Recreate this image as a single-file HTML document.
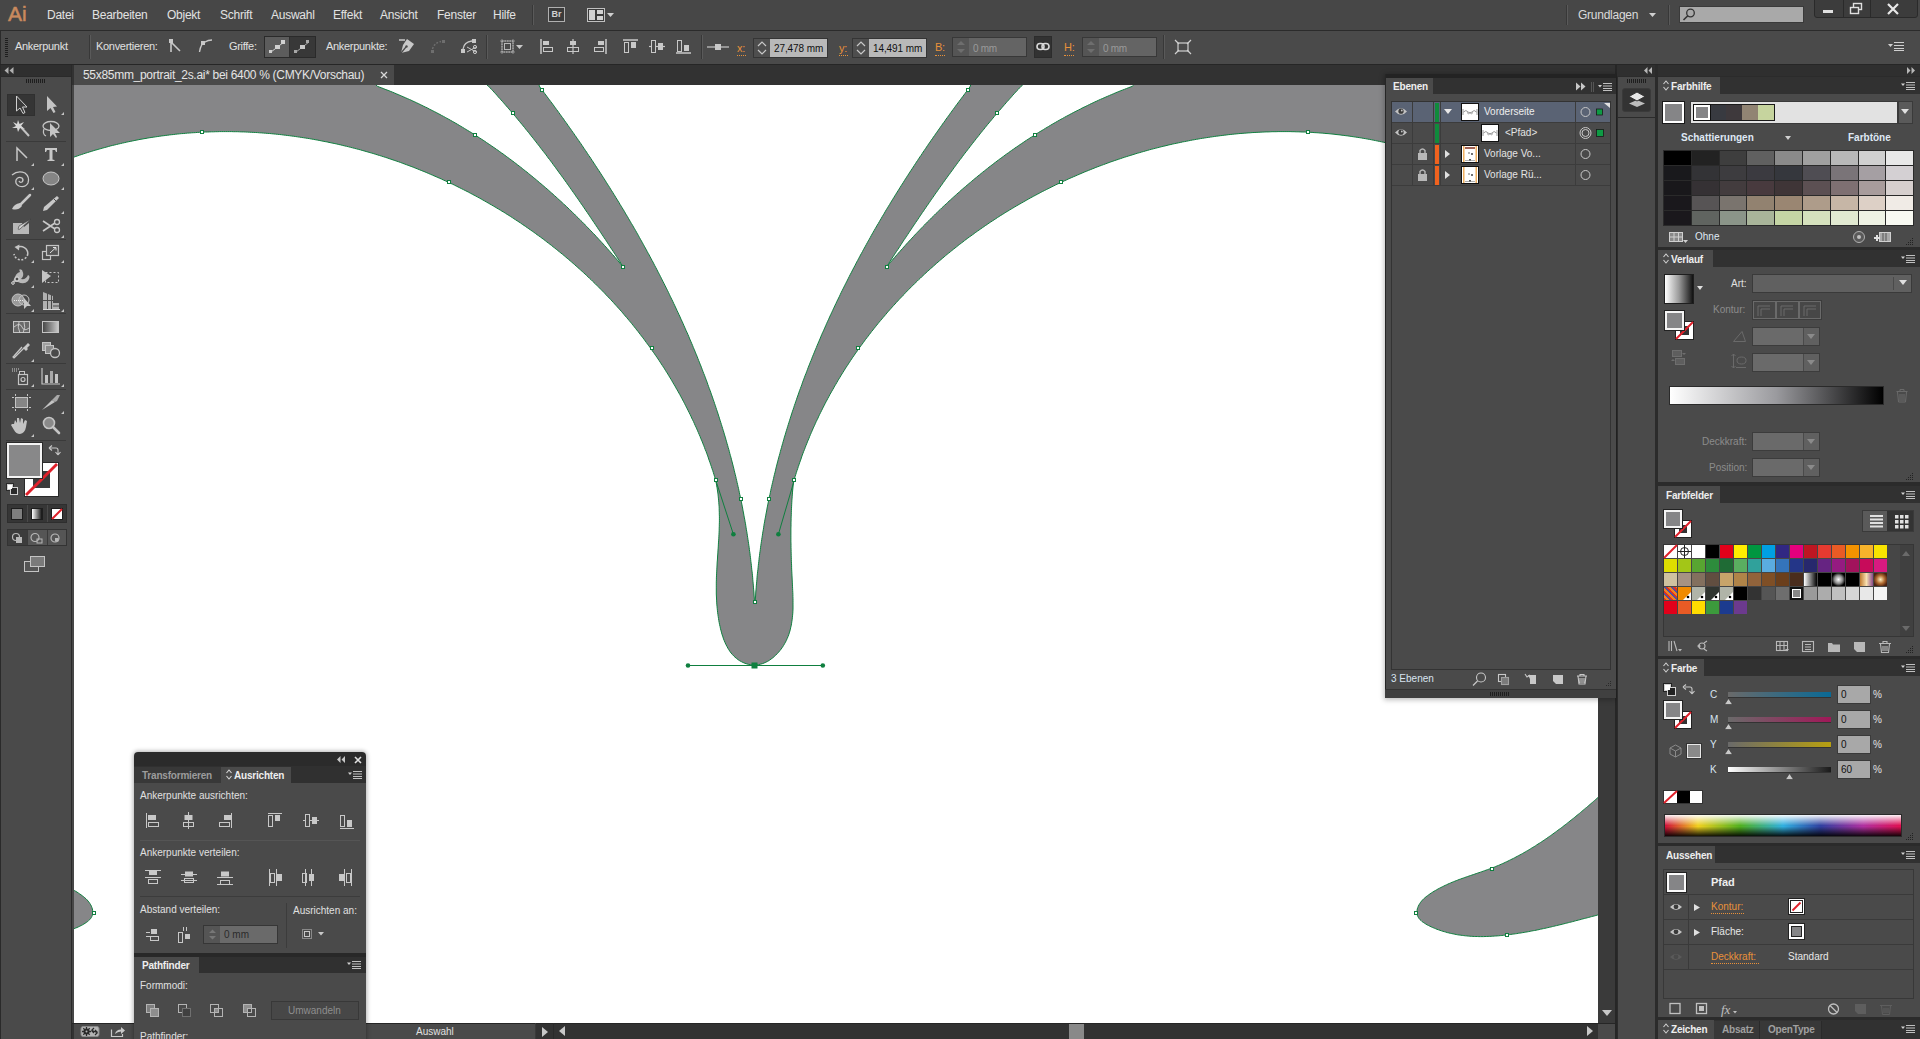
<!DOCTYPE html>
<html><head><meta charset="utf-8">
<style>
*{margin:0;padding:0;box-sizing:border-box}
html,body{width:1920px;height:1039px;overflow:hidden;background:#474747;font-family:"Liberation Sans",sans-serif;color:#dcdcdc}
.a{position:absolute}
.t{position:absolute;white-space:nowrap;line-height:12px;font-size:12px}
.s{position:absolute;white-space:nowrap;line-height:11px;font-size:11px;letter-spacing:-0.3px}
.b{font-weight:bold}
svg{position:absolute;overflow:visible}
.mn{position:absolute;top:9px;font-size:12px;line-height:12px;letter-spacing:-0.25px;color:#e2e2e2;white-space:nowrap}
.vsep{position:absolute;width:2px;border-left:1px solid #383838;border-right:1px solid #5a5a5a}
.org{color:#e8913a}
.dot{border-bottom:1px dotted #e8913a}
.panel{position:absolute;background:#4b4b4b}
.phead{position:absolute;background:#323232}
.tab{position:absolute;background:#4b4b4b;font-size:11px;line-height:11px;font-weight:bold;color:#dedede;letter-spacing:-0.2px;white-space:nowrap}
.menuic{position:absolute;width:14px;height:8px}
</style></head><body>
<!-- MENUBAR -->
<div class="a" style="left:0;top:0;width:1920px;height:30px;background:#474747"></div>
<div class="a" style="left:8px;top:3px;font-size:21px;line-height:21px;color:#c98a5e;letter-spacing:0px;-webkit-text-stroke:0.5px #c98a5e">Ai</div>
<div class="mn" style="left:47px">Datei</div>
<div class="mn" style="left:92px">Bearbeiten</div>
<div class="mn" style="left:167px">Objekt</div>
<div class="mn" style="left:220px">Schrift</div>
<div class="mn" style="left:271px">Auswahl</div>
<div class="mn" style="left:333px">Effekt</div>
<div class="mn" style="left:380px">Ansicht</div>
<div class="mn" style="left:437px">Fenster</div>
<div class="mn" style="left:493px">Hilfe</div>
<div class="vsep" style="left:532px;top:5px;height:20px"></div>
<div class="a" style="left:548px;top:7px;width:17px;height:15px;border:1px solid #b0b0b0;background:#3a3a3a;color:#d0d0d0;font-size:9px;line-height:13px;text-align:center;font-weight:bold">Br</div>
<svg style="left:587px;top:8px" width="30" height="14"><rect x="0.5" y="0.5" width="17" height="13" fill="#3a3a3a" stroke="#c0c0c0"/><rect x="2" y="2" width="6" height="10" fill="#d0d0d0"/><rect x="10" y="2" width="6" height="4" fill="#d0d0d0"/><rect x="10" y="8" width="6" height="4" fill="#d0d0d0"/><path d="M20,5 L27,5 L23.5,9 Z" fill="#d0d0d0"/></svg>
<div class="vsep" style="left:1566px;top:5px;height:20px"></div>
<div class="mn" style="left:1578px;color:#dadada">Grundlagen</div>
<svg style="left:1649px;top:13px" width="8" height="5"><path d="M0,0 L7,0 L3.5,4 Z" fill="#d0d0d0"/></svg>
<div class="vsep" style="left:1668px;top:5px;height:20px"></div>
<div class="a" style="left:1679px;top:6px;width:125px;height:17px;background:#a9a9a9;border:1px solid #3a3a3a"></div>
<svg style="left:1682px;top:8px" width="14" height="14"><circle cx="8.5" cy="5" r="3.8" fill="none" stroke="#333" stroke-width="1.3"/><path d="M5.8,7.8 L1.5,12" stroke="#333" stroke-width="1.6"/></svg>
<div class="a" style="left:1814px;top:-2px;width:104px;height:20px;background:#3c3c3c;border:1px solid #2a2a2a;border-radius:0 0 3px 3px"></div>
<div class="a" style="left:1843px;top:0;width:1px;height:18px;background:#2a2a2a"></div>
<div class="a" style="left:1870px;top:0;width:1px;height:18px;background:#2a2a2a"></div>
<div class="a" style="left:1823px;top:10px;width:10px;height:3px;background:#e0e0e0"></div>
<svg style="left:1850px;top:3px" width="14" height="12"><rect x="3.5" y="0.5" width="8" height="6" fill="none" stroke="#e0e0e0" stroke-width="1.4"/><rect x="0.5" y="4.5" width="8" height="6" fill="#3c3c3c" stroke="#e0e0e0" stroke-width="1.4"/></svg>
<svg style="left:1887px;top:3px" width="12" height="12"><path d="M1,1 L11,11 M11,1 L1,11" stroke="#e8e8e8" stroke-width="2.2"/></svg>
<!-- CONTROL BAR -->
<div class="a" style="left:0;top:30px;width:1920px;height:1px;background:#2b2b2b"></div>
<div class="a" style="left:0;top:31px;width:1920px;height:33px;background:#4a4a4a"></div>
<div class="a" style="left:0;top:31px;width:1px;height:33px;background:#2b2b2b"></div>
<div class="a" style="left:0;top:64px;width:1920px;height:1px;background:#262626"></div>
<div class="a" style="left:5px;top:38px;width:3px;height:19px;background:repeating-linear-gradient(#1e1e1e 0 1px,#4a4a4a 1px 2px)"></div>
<div class="s" style="left:15px;top:41px;color:#e0e0e0">Ankerpunkt</div>
<div class="vsep" style="left:89px;top:35px;height:24px"></div>
<div class="s" style="left:96px;top:41px;color:#e0e0e0">Konvertieren:</div>
<svg style="left:168px;top:38px" width="16" height="16"><rect x="1" y="1" width="4" height="4" fill="#c8c8c8"/><path d="M3,4 L3,14 M3.5,4.5 L12,13" stroke="#c8c8c8" stroke-width="1.6" fill="none"/></svg>
<svg style="left:198px;top:38px" width="16" height="16"><rect x="3" y="3" width="4" height="4" fill="#c8c8c8"/><path d="M1.5,14 Q3,5 7,4 Q10,2 14,2" stroke="#c8c8c8" stroke-width="1.4" fill="none"/></svg>
<div class="s" style="left:229px;top:41px;color:#e0e0e0">Griffe:</div>
<div class="a" style="left:264px;top:36px;width:52px;height:22px;background:#2f2f2f;border:1px solid #2a2a2a"></div>
<div class="a" style="left:265px;top:37px;width:24px;height:20px;background:#5c5c5c"></div>
<div class="a" style="left:290px;top:37px;width:25px;height:20px;background:#383838"></div>
<svg style="left:269px;top:40px" width="18" height="14"><path d="M2,12 L15,2" stroke="#d0d0d0" stroke-width="1"/><rect x="12" y="0" width="4" height="4" fill="#d0d0d0"/><rect x="6" y="5" width="5" height="4" fill="#d0d0d0"/><rect x="0" y="10" width="3" height="3" fill="#d0d0d0"/></svg>
<svg style="left:294px;top:40px" width="18" height="14"><path d="M2,12 L15,2" stroke="#a8a8a8" stroke-width="1"/><rect x="12" y="0" width="3" height="3" fill="#a8a8a8"/><rect x="6" y="5" width="5" height="4" fill="#c8c8c8"/><rect x="0" y="10" width="3" height="3" fill="#a8a8a8"/></svg>
<div class="s" style="left:326px;top:41px;color:#e0e0e0">Ankerpunkte:</div>
<svg style="left:398px;top:38px" width="17" height="17"><path d="M1,2 L7,2" stroke="#c8c8c8" stroke-width="1.5"/><path d="M9,1 L16,6 L11,13 L3,15 L5,7 Z" fill="#c8c8c8"/><path d="M3,15 L8,9" stroke="#4a4a4a" stroke-width="1.2"/><circle cx="8.5" cy="8.5" r="1.2" fill="#4a4a4a"/></svg>
<svg style="left:430px;top:39px" width="16" height="16"><rect x="1" y="11" width="3" height="3" fill="#6e6e6e"/><rect x="12" y="1" width="3" height="3" fill="#6e6e6e"/><path d="M2.5,10 Q4,4 11,2.5" stroke="#6e6e6e" stroke-width="1.4" fill="none" stroke-dasharray="2,1.5"/></svg>
<svg style="left:460px;top:38px" width="18" height="17"><rect x="1" y="11" width="4" height="4" fill="#c8c8c8"/><rect x="12" y="1" width="4" height="4" fill="#c8c8c8"/><path d="M3,11 Q4,4 12,3" stroke="#c8c8c8" stroke-width="1.3" fill="none"/><path d="M7,9 L16,14 M7,14 L16,9" stroke="#c8c8c8" stroke-width="1"/><circle cx="15" cy="9" r="1.6" fill="none" stroke="#c8c8c8"/><circle cx="15" cy="14" r="1.6" fill="none" stroke="#c8c8c8"/></svg>
<div class="vsep" style="left:486px;top:35px;height:24px"></div>
<svg style="left:499px;top:38px" width="26" height="18"><rect x="3" y="3" width="11" height="11" fill="none" stroke="#b8b8b8" stroke-dasharray="1.5,1"/><rect x="5.5" y="5.5" width="6" height="6" fill="none" stroke="#b8b8b8"/><path d="M1,3 L16,3 M1,14 L16,14 M3,1 L3,16 M14,1 L14,16" stroke="#b8b8b8" stroke-width="0.6"/><path d="M17,7 L24,7 L20.5,11 Z" fill="#c8c8c8"/></svg>
<svg style="left:540px;top:39px" width="15" height="15"><path d="M1,0 L1,15" stroke="#c8c8c8" stroke-width="1.5"/><rect x="3" y="2" width="6" height="4" fill="#c8c8c8"/><rect x="3.5" y="8.5" width="9" height="4" fill="none" stroke="#c8c8c8"/></svg>
<svg style="left:566px;top:39px" width="15" height="15"><path d="M7,0 L7,15" stroke="#c8c8c8" stroke-width="1.2"/><rect x="4" y="2" width="6" height="4" fill="#c8c8c8"/><rect x="1.5" y="8.5" width="11" height="4" fill="none" stroke="#c8c8c8"/></svg>
<svg style="left:593px;top:39px" width="15" height="15"><path d="M13,0 L13,15" stroke="#c8c8c8" stroke-width="1.5"/><rect x="5" y="2" width="6" height="4" fill="#c8c8c8"/><rect x="1.5" y="8.5" width="9" height="4" fill="none" stroke="#c8c8c8"/></svg>
<svg style="left:623px;top:39px" width="15" height="15"><path d="M0,1 L15,1" stroke="#c8c8c8" stroke-width="1.5"/><rect x="1.5" y="3.5" width="4" height="10" fill="none" stroke="#c8c8c8"/><rect x="8" y="3" width="5" height="6" fill="#c8c8c8"/></svg>
<svg style="left:649px;top:39px" width="16" height="15"><path d="M0,7.5 L16,7.5" stroke="#c8c8c8" stroke-width="1.2"/><rect x="2.5" y="1.5" width="4" height="12" fill="#4a4a4a" stroke="#c8c8c8"/><rect x="9" y="4" width="5" height="7" fill="#c8c8c8"/></svg>
<svg style="left:676px;top:39px" width="15" height="15"><path d="M0,14 L15,14" stroke="#c8c8c8" stroke-width="1.5"/><rect x="1.5" y="1.5" width="4" height="11" fill="none" stroke="#c8c8c8"/><rect x="8" y="6" width="5" height="6" fill="#c8c8c8"/></svg>
<div class="vsep" style="left:701px;top:35px;height:24px"></div>
<svg style="left:707px;top:42px" width="22" height="10"><path d="M0,5 L22,5" stroke="#c8c8c8" stroke-width="1.2"/><rect x="8" y="2" width="6" height="6" fill="#c8c8c8"/></svg>
<div class="s org" style="left:737px;top:43px;font-size:11px">x:</div>
<div class="a" style="left:737px;top:55px;width:9px;border-bottom:1px dotted #e8913a"></div>
<div class="a spin" style="left:753px;top:38px;width:75px;height:20px;background:#3a3a3a;border:1px solid #353535"></div>
<div class="a" style="left:754px;top:39px;width:16px;height:18px;background:#4e4e4e"></div>
<svg style="left:757px;top:41px" width="10" height="14"><path d="M1,5 L5,1 L9,5 M1,9 L5,13 L9,9" stroke="#c8c8c8" stroke-width="1.2" fill="none"/></svg>
<div class="a" style="left:770px;top:39px;width:57px;height:18px;background:#b9b9b9"></div>
<div class="s" style="left:774px;top:43px;color:#111;font-size:10px;letter-spacing:-0.1px">27,478 mm</div>
<div class="s org" style="left:839px;top:43px">y:</div>
<div class="a" style="left:839px;top:55px;width:9px;border-bottom:1px dotted #e8913a"></div>
<div class="a" style="left:852px;top:38px;width:75px;height:20px;background:#3a3a3a;border:1px solid #353535"></div>
<div class="a" style="left:853px;top:39px;width:16px;height:18px;background:#4e4e4e"></div>
<svg style="left:856px;top:41px" width="10" height="14"><path d="M1,5 L5,1 L9,5 M1,9 L5,13 L9,9" stroke="#c8c8c8" stroke-width="1.2" fill="none"/></svg>
<div class="a" style="left:869px;top:39px;width:57px;height:18px;background:#b9b9b9"></div>
<div class="s" style="left:873px;top:43px;color:#111;font-size:10px;letter-spacing:-0.1px">14,491 mm</div>
<div class="s org" style="left:935px;top:42px">B:</div>
<div class="a" style="left:935px;top:55px;width:10px;border-bottom:1px dotted #e8913a"></div>
<div class="a" style="left:952px;top:37px;width:75px;height:20px;background:#3e3e3e;border:1px solid #383838"></div>
<div class="a" style="left:953px;top:38px;width:16px;height:18px;background:#555"></div>
<svg style="left:956px;top:40px" width="10" height="14"><path d="M1,5 L5,1 L9,5 Z M1,9 L5,13 L9,9 Z" fill="#6e6e6e"/></svg>
<div class="a" style="left:969px;top:38px;width:57px;height:18px;background:#646464"></div>
<div class="s" style="left:973px;top:43px;color:#9a9a9a;font-size:10px">0 mm</div>
<div class="a" style="left:1034px;top:36px;width:18px;height:22px;background:#323232;border:1px solid #2c2c2c"></div>
<svg style="left:1036px;top:42px" width="14" height="10"><rect x="1" y="1.5" width="7" height="6" rx="3" fill="none" stroke="#d8d8d8" stroke-width="1.6"/><rect x="6" y="1.5" width="7" height="6" rx="3" fill="none" stroke="#d8d8d8" stroke-width="1.6"/></svg>
<div class="s org" style="left:1064px;top:42px">H:</div>
<div class="a" style="left:1064px;top:55px;width:10px;border-bottom:1px dotted #e8913a"></div>
<div class="a" style="left:1082px;top:37px;width:75px;height:20px;background:#3e3e3e;border:1px solid #383838"></div>
<div class="a" style="left:1083px;top:38px;width:16px;height:18px;background:#555"></div>
<svg style="left:1086px;top:40px" width="10" height="14"><path d="M1,5 L5,1 L9,5 Z M1,9 L5,13 L9,9 Z" fill="#6e6e6e"/></svg>
<div class="a" style="left:1099px;top:38px;width:57px;height:18px;background:#646464"></div>
<div class="s" style="left:1103px;top:43px;color:#9a9a9a;font-size:10px">0 mm</div>
<div class="vsep" style="left:1163px;top:35px;height:24px"></div>
<svg style="left:1174px;top:39px" width="18" height="16"><rect x="4" y="4" width="10" height="8" fill="none" stroke="#d0d0d0" stroke-width="1.2"/><path d="M1,1 L5,5 M17,1 L13,5 M1,15 L5,11 M17,15 L13,11" stroke="#d0d0d0" stroke-width="1.2"/></svg>
<svg style="left:1888px;top:42px" width="16" height="9"><path d="M0,2 L5,2 L2.5,5 Z" fill="#d0d0d0"/><path d="M6,0.5 L16,0.5 M6,3.5 L16,3.5 M6,6.5 L16,6.5 M6,8.5 L16,8.5" stroke="#d0d0d0" stroke-width="1"/></svg>
<!-- TOOLBAR -->
<div class="a" style="left:0;top:65px;width:72px;height:974px;background:#2a2a2a"></div>
<div class="a" style="left:1px;top:65px;width:70px;height:11px;background:#2f2f2f"></div>
<svg style="left:4px;top:67px" width="10" height="7"><path d="M4.5,0 L0.5,3.5 L4.5,7 Z M9.5,0 L5.5,3.5 L9.5,7 Z" fill="#b0b0b0"/></svg>
<div class="a" style="left:1px;top:77px;width:70px;height:962px;background:#4a4a4a"></div>
<div class="a" style="left:26px;top:79px;width:19px;height:4px;background:repeating-linear-gradient(90deg,#1e1e1e 0 1px,#4a4a4a 1px 2px)"></div>
<div class="a" style="left:7px;top:94px;width:28px;height:22px;background:#353535;border:1px solid #303030"></div>
<div class="a" style="left:6px;top:141px;width:60px;height:1px;background:#3a3a3a"></div>
<div class="a" style="left:6px;top:239px;width:60px;height:1px;background:#3a3a3a"></div>
<div class="a" style="left:6px;top:313px;width:60px;height:1px;background:#3a3a3a"></div>
<div class="a" style="left:6px;top:363px;width:60px;height:1px;background:#3a3a3a"></div>
<div class="a" style="left:6px;top:389px;width:60px;height:1px;background:#3a3a3a"></div>
<div class="a" style="left:6px;top:440px;width:60px;height:1px;background:#3a3a3a"></div>
<svg style="left:0;top:0" width="72" height="600">
<g fill="#c4c4c4">
<!-- flyout triangles -->
<path d="M64,112 L64,115 L61,115 Z M34,163 L34,166 L31,166 Z M64,163 L64,166 L61,166 Z M34,187 L34,190 L31,190 Z M64,187 L64,190 L61,190 Z M64,211 L64,214 L61,214 Z M64,235 L64,238 L61,238 Z M34,260 L34,263 L31,263 Z M64,260 L64,263 L61,263 Z M34,285 L34,288 L31,288 Z M34,309 L34,312 L31,312 Z M64,309 L64,312 L61,312 Z M34,359 L34,362 L31,362 Z M34,384 L34,387 L31,387 Z M64,384 L64,387 L61,387 Z M64,411 L64,414 L61,414 Z M34,434 L34,437 L31,437 Z"/>
</g>
<!-- row1 selection -->
<path d="M16.5,96 L16.5,111 L20,108 L23,113.5 L25,112.5 L22.5,107 L27,107 Z" fill="#3a3a3a" stroke="#d0d0d0" stroke-width="1"/>
<path d="M47,96 L47,111 L50.5,108 L53.5,113 L55.5,112 L53,107 L57,106.5 Z" fill="#c4c4c4"/>
<!-- row2 wand / lasso -->
<path d="M19,125 L29,136" stroke="#c4c4c4" stroke-width="2"/>
<path d="M18,120 L19.5,124 L24,122 L21,126 L25,129 L20,128 L18,132 L17,128 L12,128 L16,126 L13,122 L17,124 Z" fill="#d8d8d8"/>
<ellipse cx="51" cy="126" rx="8" ry="4.5" fill="none" stroke="#c4c4c4" stroke-width="1.3"/>
<path d="M50,123 L50,137 L53,134 L56,138 L57,137 L55,133 L60,133 Z" fill="#c4c4c4"/>
<path d="M44,129 Q42,134 46,136" fill="none" stroke="#c4c4c4" stroke-width="1.2"/>
<!-- row3 line / T -->
<path d="M17,161 L17,148 L27,158" fill="none" stroke="#c8c8c8" stroke-width="1.5"/>
<path d="M45,148 L57,148 L57,152 L56,152 L55,150 L52.5,150 L52.5,159.5 L54.5,160 L54.5,161 L47.5,161 L47.5,160 L49.5,159.5 L49.5,150 L47,150 L46,152 L45,152 Z" fill="#c8c8c8"/>
<!-- row4 spiral / ellipse -->
<path d="M12,175 Q18,170 25,173 Q30,177 28,183 Q25,188 19,186 Q15,184 16,180 Q18,176 22,178 Q24,180 22,182 Q20,183 19,181" fill="none" stroke="#c8c8c8" stroke-width="1.3"/>
<ellipse cx="51" cy="178.5" rx="8" ry="6.5" fill="#858585" stroke="#c8c8c8" stroke-width="1"/>
<!-- row5 brush / pencil -->
<path d="M30,195 L20,205" stroke="#c8c8c8" stroke-width="2.5" stroke-linecap="round"/>
<path d="M20,203 Q14,204 12,209 Q18,211 22,206 Z" fill="#c8c8c8"/>
<path d="M57,196 L59,198 L47,210 L43,211 L44,207 Z" fill="#c8c8c8"/>
<path d="M54,199 L56,201" stroke="#4a4a4a" stroke-width="1"/>
<!-- row6 blob brush / scissors -->
<path d="M13,223 L22,223 L24,227 L29,223 L29,234 L13,234 Z" fill="#b8b8b8"/>
<path d="M31,219 L20,229 Q17,231 19,226 Z" fill="#d0d0d0" stroke="#3a3a3a" stroke-width="0.6"/>
<path d="M43,221 L55,229 M43,231 L55,223" stroke="#c8c8c8" stroke-width="1.6"/>
<circle cx="57" cy="222" r="2.5" fill="none" stroke="#c8c8c8" stroke-width="1.3"/>
<circle cx="57" cy="230" r="2.5" fill="none" stroke="#c8c8c8" stroke-width="1.3"/>
<!-- row7 rotate / scale -->
<g transform="translate(0,2)"><path d="M17,245.8 A7,7 0 0 1 27.8,252" fill="none" stroke="#c4c4c4" stroke-width="1.5"/>
<path d="M27.8,252 A7,7 0 0 1 14,252" fill="none" stroke="#c4c4c4" stroke-width="1.6" stroke-dasharray="2,1.6"/>
<path d="M14.5,245 L19.5,242.5 L19,248.5 Z" fill="#c4c4c4"/></g>
<rect x="42.5" y="251.5" width="8" height="8" fill="none" stroke="#c4c4c4" stroke-width="1.2"/>
<rect x="46.5" y="245.5" width="12" height="10" fill="#555" stroke="#c4c4c4" stroke-width="1.2"/>
<path d="M50,253 L56,247.5 M53,247.5 L56,247.5 L56,250.5" fill="none" stroke="#e0e0e0" stroke-width="1"/>
<!-- row8 warp / free transform -->
<path d="M13,282 Q16,272 20,272 Q18,268 22,270 Q25,276 21,279 Q26,280 28,275 Q31,276 28,281 Q24,285 18,282" fill="#b8b8b8"/>
<circle cx="17" cy="279" r="2" fill="#4a4a4a" stroke="#e0e0e0"/>
<circle cx="13" cy="283" r="1.3" fill="none" stroke="#e0e0e0"/>
<path d="M42,270 L42,283 L51,276 Z" fill="#c4c4c4"/>
<rect x="45.5" y="272.5" width="13" height="10" fill="none" stroke="#c4c4c4" stroke-dasharray="2,2"/>
<!-- row9 shape builder / perspective -->
<circle cx="18" cy="300" r="6" fill="#9a9a9a" stroke="#c4c4c4"/>
<circle cx="24" cy="300" r="5" fill="none" stroke="#c4c4c4"/>
<path d="M14,300.5 L25,300.5" stroke="#e8e8e8" stroke-dasharray="1,1"/>
<path d="M24,298 L24,309 L27,306 L31,306 Z" fill="#c8c8c8"/>
<path d="M43,292 L53,296 L53,303 L59,303 L59,309 L43,309 Z" fill="#b0b0b0"/>
<path d="M47.5,293 L47.5,309 M51.5,295 L51.5,309 M43,300.5 L53,300.5 M53,306 L59,306" stroke="#4a4a4a" stroke-width="1"/>
<path d="M43,309.5 L60,309.5" stroke="#d8d8d8"/>
<!-- row10 mesh / gradient -->
<rect x="13.5" y="321.5" width="16" height="11" fill="#6a6a6a" stroke="#c4c4c4"/>
<path d="M14,327 Q20,322 22,327 Q24,332 29,328 M19,322 Q17,327 20,333 M24,322 Q26,327 23,333" fill="none" stroke="#d0d0d0" stroke-width="0.9"/>
<defs><linearGradient id="tg" x1="0" x2="1"><stop offset="0" stop-color="#444"/><stop offset="1" stop-color="#ccc"/></linearGradient></defs>
<rect x="42.5" y="321.5" width="16" height="11" fill="url(#tg)" stroke="#c4c4c4"/>
<!-- row11 eyedropper / blend -->
<path d="M28,343 L30,345 L27,348 L28,349 L26,351 L23,348 Z" fill="#c8c8c8"/>
<path d="M24,348 L15,357 L14,358 L13,357 L14,356 L22,347" fill="none" stroke="#c8c8c8" stroke-width="1.2"/>
<rect x="42.5" y="342.5" width="8" height="8" fill="#a0a0a0" stroke="#c4c4c4"/>
<rect x="45.5" y="345.5" width="8" height="8" fill="#8a8a8a" stroke="#c4c4c4"/>
<circle cx="55" cy="353" r="4.5" fill="#4a4a4a" stroke="#c4c4c4" stroke-width="1.3"/>
<!-- row12 symbol sprayer / graph -->
<path d="M12,369 L20,369 M12,371 L18,371" stroke="#d0d0d0" stroke-dasharray="1,1"/>
<rect x="19.5" y="371.5" width="5" height="3" fill="none" stroke="#c4c4c4"/>
<rect x="18.5" y="374.5" width="9" height="10" fill="none" stroke="#c4c4c4" stroke-width="1.2"/>
<circle cx="23" cy="379.5" r="2" fill="none" stroke="#c4c4c4" stroke-width="1.2"/>
<path d="M42,368 L42,384 L60,384" fill="none" stroke="#c4c4c4" stroke-width="1.2"/>
<rect x="45" y="375" width="3" height="8" fill="#c4c4c4"/><rect x="50" y="371" width="3" height="12" fill="#a8a8a8"/><rect x="55" y="374" width="3" height="9" fill="#c4c4c4"/>
<!-- row13 artboard / slice -->
<rect x="15.5" y="397.5" width="12" height="10" fill="#858585" stroke="#c4c4c4"/>
<path d="M12,397.5 L14,397.5 M29,397.5 L31,397.5 M12,407.5 L14,407.5 M29,407.5 L31,407.5 M15.5,394 L15.5,396 M27.5,394 L27.5,396 M15.5,409 L15.5,411 M27.5,409 L27.5,411" stroke="#c4c4c4"/>
<path d="M42,410 L52,400 L55,402 Z" fill="#c4c4c4"/>
<path d="M52,400 L57,395 L60,395 L57,401 L55,402 Z" fill="#a8a8a8"/>
<!-- row14 hand / zoom -->
<path d="M14,424 L15,420 L17,423 L17,418 L19,418 L20,423 L21,418 L23,419 L23,424 L25,420 L27,421 L26,427 Q25,433 20,434 Q16,434 14,430 L11,425 L12,424 Z" fill="#c4c4c4"/>
<circle cx="49" cy="423" r="5.5" fill="#8a8a8a" stroke="#c4c4c4" stroke-width="1.6"/>
<path d="M53,427 L59,433" stroke="#c4c4c4" stroke-width="2.6" stroke-linecap="round"/>
</svg>
<!-- fill/stroke -->
<div class="a" style="left:24px;top:462px;width:35px;height:35px;background:#fff;border:1px solid #2a2a2a"></div>
<div class="a" style="left:32px;top:470px;width:19px;height:19px;background:#3a3a3a;border:1px solid #fff"></div>
<svg style="left:24px;top:462px" width="35" height="35"><path d="M2,33 L33,2" stroke="#e0202a" stroke-width="2.8"/></svg>
<div class="a" style="left:7px;top:443px;width:35px;height:35px;background:#888889;border:2px solid #f4f4f4;outline:1px solid #2a2a2a"></div>
<svg style="left:49px;top:444px" width="11" height="12"><path d="M1.5,4 L7,4 Q9,4 9,6 L9,10.5 M0,4 L3,1.5 M0,4 L3,6.5 M9,11 L6.5,8 M9,11 L11.5,8" fill="none" stroke="#c8c8c8" stroke-width="1.1"/></svg>
<svg style="left:6px;top:483px" width="12" height="12"><rect x="0.5" y="0.5" width="7" height="7" fill="#d0d0d0" stroke="#2a2a2a"/><rect x="4.5" y="4.5" width="7" height="7" fill="#2a2a2a" stroke="#d0d0d0"/><rect x="2" y="2" width="4" height="4" fill="#fff"/></svg>
<div class="a" style="left:7px;top:504px;width:60px;height:19px;background:#363636;border:1px solid #2e2e2e"></div>
<div class="a" style="left:27px;top:505px;width:1px;height:17px;background:#4a4a4a"></div>
<div class="a" style="left:47px;top:505px;width:1px;height:17px;background:#4a4a4a"></div>
<div class="a" style="left:11px;top:508px;width:12px;height:12px;background:#7f7f7f;border:1px solid #1e1e1e"></div>
<div class="a" style="left:31px;top:508px;width:12px;height:12px;background:linear-gradient(90deg,#fff,#111);border:1px solid #1e1e1e"></div>
<div class="a" style="left:51px;top:508px;width:12px;height:12px;background:#fff;border:1px solid #1e1e1e;overflow:hidden"></div>
<svg style="left:51px;top:508px" width="12" height="12"><path d="M1,11 L11,1" stroke="#e0202a" stroke-width="2"/></svg>
<div class="a" style="left:7px;top:529px;width:60px;height:17px;background:#555555;border:1px solid #333"></div>
<div class="a" style="left:8px;top:530px;width:19px;height:15px;background:#3c3c3c"></div>
<div class="a" style="left:27px;top:530px;width:1px;height:15px;background:#3a3a3a"></div>
<div class="a" style="left:47px;top:530px;width:1px;height:15px;background:#3a3a3a"></div>
<svg style="left:11px;top:532px" width="56" height="12"><circle cx="5" cy="5" r="3.5" fill="none" stroke="#b8b8b8" stroke-width="1.2"/><rect x="5" y="5" width="6" height="6" fill="#b8b8b8"/><circle cx="24" cy="5.5" r="4" fill="none" stroke="#b8b8b8" stroke-width="1.2"/><rect x="26" y="7" width="5" height="4" fill="none" stroke="#b8b8b8"/><circle cx="44" cy="6" r="4" fill="none" stroke="#b8b8b8" stroke-width="1.2"/><rect x="44" y="6" width="3.5" height="3.5" fill="#b8b8b8"/></svg>
<svg style="left:23px;top:555px" width="24" height="18"><rect x="1.5" y="6.5" width="14" height="10" fill="#555" stroke="#c4c4c4"/><rect x="7.5" y="1.5" width="14" height="10" fill="#7a7a7a" stroke="#c4c4c4"/></svg>
<!-- DOC AREA -->
<div class="a" style="left:72px;top:65px;width:1545px;height:20px;background:#323232"></div>
<div class="a" style="left:74px;top:65px;width:320px;height:20px;background:#4a4a4a"></div>
<div class="t" style="left:83px;top:69px;font-size:12px;letter-spacing:-0.3px;color:#e4e4e4">55x85mm_portrait_2s.ai* bei 6400 % (CMYK/Vorschau)</div>
<svg style="left:380px;top:71px" width="8" height="8"><path d="M1,1 L7,7 M7,1 L1,7" stroke="#d8d8d8" stroke-width="1.3"/></svg>
<div class="a" id="canvas" style="left:74px;top:85px;width:1524px;height:938px;background:#ffffff;overflow:hidden">
<svg width="1524" height="938" viewBox="74 85 1524 938" style="position:absolute;left:0;top:0">
<g fill="#868688" stroke="#0f7f3f" stroke-width="1">
<path d="M30,70 L376,70 L376.0,85.0 L377.6,86.4 L379.5,87.1 L381.4,87.8 L383.2,88.5 L385.1,89.3 L387.0,90.0 L388.9,90.7 L390.8,91.5 L392.6,92.2 L394.5,93.0 L396.3,93.8 L398.2,94.6 L400.1,95.4 L401.9,96.2 L403.8,97.0 L405.6,97.8 L407.4,98.6 L409.3,99.4 L411.1,100.2 L412.9,101.1 L414.8,101.9 L416.6,102.8 L418.4,103.6 L420.2,104.5 L422.0,105.4 L423.8,106.3 L425.7,107.2 L427.5,108.0 L429.2,109.0 L431.0,109.9 L432.8,110.8 L434.6,111.7 L436.4,112.6 L438.2,113.6 L440.0,114.5 L441.7,115.5 L443.5,116.4 L445.3,117.4 L447.0,118.4 L448.8,119.3 L450.5,120.3 L452.3,121.3 L454.0,122.3 L455.8,123.3 L457.5,124.3 L459.2,125.3 L461.0,126.4 L462.7,127.4 L464.4,128.4 L466.1,129.5 L467.8,130.5 L469.6,131.6 L471.3,132.6 L473.0,133.7 L474.7,134.8 L476.4,135.9 L478.0,136.9 L479.7,138.0 L481.4,139.1 L483.1,140.2 L484.8,141.3 L486.5,142.5 L488.1,143.6 L489.8,144.7 L491.4,145.8 L493.1,147.0 L494.8,148.1 L496.4,149.3 L498.1,150.4 L499.7,151.6 L501.3,152.8 L503.0,153.9 L504.6,155.1 L506.2,156.3 L507.8,157.5 L509.5,158.7 L511.1,159.9 L512.7,161.1 L514.3,162.3 L515.9,163.5 L517.5,164.8 L519.1,166.0 L520.7,167.2 L522.3,168.5 L523.8,169.7 L525.4,171.0 L527.0,172.2 L528.6,173.5 L530.1,174.8 L531.7,176.0 L533.2,177.3 L534.8,178.6 L536.4,179.9 L537.9,181.2 L539.4,182.5 L541.0,183.8 L542.5,185.1 L544.0,186.4 L545.6,187.7 L547.1,189.0 L548.6,190.3 L550.1,191.7 L551.6,193.0 L553.1,194.3 L554.6,195.7 L556.1,197.0 L557.6,198.4 L559.1,199.8 L560.6,201.1 L562.1,202.5 L563.5,203.9 L565.0,205.2 L566.5,206.6 L568.0,208.0 L569.4,209.4 L570.9,210.8 L572.3,212.2 L573.8,213.6 L575.2,215.0 L576.6,216.4 L578.1,217.8 L579.5,219.3 L580.9,220.7 L582.4,222.1 L583.8,223.5 L585.2,225.0 L586.6,226.4 L588.0,227.9 L589.4,229.3 L590.8,230.8 L592.2,232.2 L593.6,233.7 L595.0,235.1 L596.3,236.6 L597.7,238.1 L599.1,239.6 L600.4,241.0 L601.8,242.5 L603.2,244.0 L604.5,245.5 L605.9,247.0 L607.2,248.5 L608.5,250.0 L609.9,251.5 L611.2,253.0 L612.5,254.5 L613.9,256.0 L615.2,257.6 L616.5,259.1 L617.8,260.6 L619.1,262.1 L620.4,263.7 L621.7,265.2 L622.8,266.9 L622.8,266.9 L622.0,265.0 L620.9,263.3 L619.8,261.6 L618.7,259.9 L617.6,258.2 L616.5,256.5 L615.4,254.8 L614.3,253.1 L613.2,251.4 L612.0,249.7 L610.9,248.0 L609.8,246.3 L608.7,244.6 L607.6,242.9 L606.5,241.2 L605.4,239.5 L604.2,237.8 L603.1,236.1 L602.0,234.5 L600.9,232.8 L599.8,231.1 L598.6,229.4 L597.5,227.7 L596.4,226.0 L595.2,224.3 L594.1,222.6 L593.0,221.0 L591.8,219.3 L590.7,217.6 L589.6,215.9 L588.4,214.2 L587.3,212.5 L586.1,210.9 L585.0,209.2 L583.8,207.5 L582.7,205.8 L581.5,204.2 L580.4,202.5 L579.2,200.8 L578.1,199.1 L576.9,197.5 L575.7,195.8 L574.6,194.1 L573.4,192.5 L572.2,190.8 L571.1,189.2 L569.9,187.5 L568.7,185.8 L567.5,184.2 L566.4,182.5 L565.2,180.9 L564.0,179.2 L562.8,177.6 L561.6,175.9 L560.4,174.3 L559.2,172.7 L558.0,171.0 L556.8,169.4 L555.6,167.7 L554.4,166.1 L553.2,164.5 L552.0,162.8 L550.8,161.2 L549.6,159.6 L548.3,158.0 L547.1,156.3 L545.9,154.7 L544.7,153.1 L543.4,151.5 L542.2,149.9 L540.9,148.3 L539.7,146.7 L538.5,145.1 L537.2,143.5 L536.0,141.9 L534.7,140.3 L533.5,138.7 L532.2,137.1 L530.9,135.5 L529.7,133.9 L528.4,132.3 L527.1,130.7 L525.8,129.2 L524.6,127.6 L523.3,126.0 L522.0,124.4 L520.7,122.9 L519.4,121.3 L518.1,119.8 L516.8,118.2 L515.5,116.6 L514.2,115.1 L512.9,113.5 L511.6,112.0 L510.3,110.5 L508.9,108.9 L507.6,107.4 L506.3,105.9 L504.9,104.3 L503.6,102.8 L502.3,101.3 L500.9,99.8 L499.6,98.3 L498.2,96.8 L496.9,95.2 L495.5,93.7 L494.1,92.2 L492.8,90.7 L491.4,89.3 L490.0,87.8 L488.6,86.3 L487.0,85.0 L487,70 L539,70 L539.0,85.0 L539.8,87.0 L541.0,88.6 L542.2,90.2 L543.4,91.8 L544.6,93.4 L545.8,95.0 L547.0,96.6 L548.2,98.2 L549.4,99.8 L550.6,101.4 L551.8,103.0 L553.0,104.6 L554.2,106.2 L555.3,107.8 L556.5,109.4 L557.7,111.0 L558.9,112.7 L560.1,114.3 L561.2,115.9 L562.4,117.5 L563.6,119.1 L564.7,120.8 L565.9,122.4 L567.1,124.0 L568.2,125.7 L569.4,127.3 L570.5,128.9 L571.7,130.6 L572.8,132.2 L574.0,133.8 L575.1,135.5 L576.3,137.1 L577.4,138.8 L578.6,140.4 L579.7,142.1 L580.9,143.7 L582.0,145.4 L583.1,147.0 L584.2,148.7 L585.4,150.4 L586.5,152.0 L587.6,153.7 L588.7,155.4 L589.9,157.0 L591.0,158.7 L592.1,160.4 L593.2,162.0 L594.3,163.7 L595.4,165.4 L596.5,167.1 L597.6,168.8 L598.7,170.4 L599.8,172.1 L600.9,173.8 L602.0,175.5 L603.1,177.2 L604.2,178.9 L605.3,180.6 L606.3,182.3 L607.4,184.0 L608.5,185.7 L609.6,187.4 L610.6,189.1 L611.7,190.8 L612.8,192.5 L613.8,194.2 L614.9,195.9 L615.9,197.6 L617.0,199.3 L618.0,201.0 L619.1,202.7 L620.1,204.5 L621.2,206.2 L622.2,207.9 L623.3,209.6 L624.3,211.3 L625.3,213.1 L626.3,214.8 L627.4,216.5 L628.4,218.3 L629.4,220.0 L630.4,221.7 L631.4,223.5 L632.5,225.2 L633.5,227.0 L634.5,228.7 L635.5,230.4 L636.5,232.2 L637.5,233.9 L638.5,235.7 L639.4,237.4 L640.4,239.2 L641.4,240.9 L642.4,242.7 L643.4,244.5 L644.3,246.2 L645.3,248.0 L646.3,249.7 L647.2,251.5 L648.2,253.3 L649.2,255.0 L650.1,256.8 L651.1,258.6 L652.0,260.4 L653.0,262.1 L653.9,263.9 L654.8,265.7 L655.8,267.5 L656.7,269.2 L657.6,271.0 L658.5,272.8 L659.5,274.6 L660.4,276.4 L661.3,278.2 L662.2,280.0 L663.1,281.8 L664.0,283.5 L664.9,285.3 L665.8,287.1 L666.7,288.9 L667.6,290.7 L668.5,292.5 L669.4,294.4 L670.2,296.2 L671.1,298.0 L672.0,299.8 L672.9,301.6 L673.7,303.4 L674.6,305.2 L675.4,307.0 L676.3,308.8 L677.1,310.7 L678.0,312.5 L678.8,314.3 L679.7,316.1 L680.5,318.0 L681.3,319.8 L682.2,321.6 L683.0,323.4 L683.8,325.3 L684.6,327.1 L685.4,328.9 L686.2,330.8 L687.1,332.6 L687.9,334.4 L688.7,336.3 L689.4,338.1 L690.2,340.0 L691.0,341.8 L691.8,343.7 L692.6,345.5 L693.3,347.4 L694.1,349.2 L694.9,351.1 L695.6,352.9 L696.4,354.8 L697.2,356.6 L697.9,358.5 L698.6,360.4 L699.4,362.2 L700.1,364.1 L700.9,366.0 L701.6,367.8 L702.3,369.7 L703.0,371.6 L703.7,373.4 L704.5,375.3 L705.2,377.2 L705.9,379.1 L706.6,380.9 L707.3,382.8 L707.9,384.7 L708.6,386.6 L709.3,388.5 L710.0,390.3 L710.7,392.2 L711.3,394.1 L712.0,396.0 L712.7,397.9 L713.3,399.8 L714.0,401.7 L714.6,403.6 L715.3,405.5 L715.9,407.4 L716.5,409.3 L717.2,411.2 L717.8,413.1 L718.4,415.0 L719.0,416.9 L719.6,418.8 L720.2,420.7 L720.8,422.6 L721.4,424.5 L722.0,426.4 L722.6,428.4 L723.2,430.3 L723.8,432.2 L724.3,434.1 L724.9,436.0 L725.5,437.9 L726.0,439.9 L726.6,441.8 L727.1,443.7 L727.7,445.6 L728.2,447.6 L728.8,449.5 L729.3,451.4 L729.8,453.4 L730.3,455.3 L730.9,457.2 L731.4,459.2 L731.9,461.1 L732.4,463.0 L732.9,465.0 L733.4,466.9 L733.9,468.9 L734.3,470.8 L734.8,472.8 L735.3,474.7 L735.8,476.7 L736.2,478.6 L736.7,480.6 L737.1,482.5 L737.6,484.5 L738.0,486.4 L738.5,488.4 L738.9,490.3 L739.3,492.3 L739.7,494.3 L740.2,496.2 L740.6,498.2 L741.0,500.2 L741.4,502.1 L741.8,504.1 L742.2,506.1 L742.6,508.0 L742.9,510.0 L743.3,512.0 L743.7,514.0 L744.0,515.9 L744.4,517.9 L744.8,519.9 L745.1,521.9 L745.5,523.8 L745.8,525.8 L746.1,527.8 L746.4,529.8 L746.8,531.8 L747.1,533.8 L747.4,535.8 L747.7,537.7 L748.0,539.7 L748.3,541.7 L748.6,543.7 L748.9,545.7 L749.2,547.7 L749.4,549.7 L749.7,551.7 L750.0,553.7 L750.2,555.7 L750.5,557.7 L750.7,559.7 L750.9,561.7 L751.2,563.7 L751.4,565.7 L751.6,567.8 L751.8,569.8 L752.1,571.8 L752.3,573.8 L752.5,575.8 L752.7,577.8 L752.8,579.8 L753.0,581.8 L753.2,583.9 L753.4,585.9 L753.5,587.9 L753.7,589.9 L753.9,592.0 L754.0,594.0 L754.1,596.0 L754.3,598.0 L754.4,600.1 L755.0,601.8 L754.7,601.8 L755.3,600.1 L755.4,598.0 L755.6,596.0 L755.7,594.0 L755.8,592.0 L756.0,589.9 L756.2,587.9 L756.3,585.9 L756.5,583.9 L756.7,581.8 L756.9,579.8 L757.0,577.8 L757.2,575.8 L757.4,573.8 L757.6,571.8 L757.9,569.8 L758.1,567.8 L758.3,565.7 L758.5,563.7 L758.8,561.7 L759.0,559.7 L759.2,557.7 L759.5,555.7 L759.7,553.7 L760.0,551.7 L760.3,549.7 L760.5,547.7 L760.8,545.7 L761.1,543.7 L761.4,541.7 L761.7,539.7 L762.0,537.7 L762.3,535.8 L762.6,533.8 L762.9,531.8 L763.3,529.8 L763.6,527.8 L763.9,525.8 L764.2,523.8 L764.6,521.9 L764.9,519.9 L765.3,517.9 L765.7,515.9 L766.0,514.0 L766.4,512.0 L766.8,510.0 L767.1,508.0 L767.5,506.1 L767.9,504.1 L768.3,502.1 L768.7,500.2 L769.1,498.2 L769.5,496.2 L770.0,494.3 L770.4,492.3 L770.8,490.3 L771.2,488.4 L771.7,486.4 L772.1,484.5 L772.6,482.5 L773.0,480.6 L773.5,478.6 L773.9,476.7 L774.4,474.7 L774.9,472.8 L775.4,470.8 L775.8,468.9 L776.3,466.9 L776.8,465.0 L777.3,463.0 L777.8,461.1 L778.3,459.2 L778.8,457.2 L779.4,455.3 L779.9,453.4 L780.4,451.4 L780.9,449.5 L781.5,447.6 L782.0,445.6 L782.6,443.7 L783.1,441.8 L783.7,439.9 L784.2,437.9 L784.8,436.0 L785.4,434.1 L785.9,432.2 L786.5,430.3 L787.1,428.4 L787.7,426.4 L788.3,424.5 L788.9,422.6 L789.5,420.7 L790.1,418.8 L790.7,416.9 L791.3,415.0 L791.9,413.1 L792.5,411.2 L793.2,409.3 L793.8,407.4 L794.4,405.5 L795.1,403.6 L795.7,401.7 L796.4,399.8 L797.0,397.9 L797.7,396.0 L798.4,394.1 L799.0,392.2 L799.7,390.3 L800.4,388.5 L801.1,386.6 L801.8,384.7 L802.4,382.8 L803.1,380.9 L803.8,379.1 L804.5,377.2 L805.2,375.3 L806.0,373.4 L806.7,371.6 L807.4,369.7 L808.1,367.8 L808.8,366.0 L809.6,364.1 L810.3,362.2 L811.1,360.4 L811.8,358.5 L812.5,356.6 L813.3,354.8 L814.1,352.9 L814.8,351.1 L815.6,349.2 L816.4,347.4 L817.1,345.5 L817.9,343.7 L818.7,341.8 L819.5,340.0 L820.3,338.1 L821.0,336.3 L821.8,334.4 L822.6,332.6 L823.5,330.8 L824.3,328.9 L825.1,327.1 L825.9,325.3 L826.7,323.4 L827.5,321.6 L828.4,319.8 L829.2,318.0 L830.0,316.1 L830.9,314.3 L831.7,312.5 L832.6,310.7 L833.4,308.8 L834.3,307.0 L835.1,305.2 L836.0,303.4 L836.8,301.6 L837.7,299.8 L838.6,298.0 L839.5,296.2 L840.3,294.4 L841.2,292.5 L842.1,290.7 L843.0,288.9 L843.9,287.1 L844.8,285.3 L845.7,283.5 L846.6,281.8 L847.5,280.0 L848.4,278.2 L849.3,276.4 L850.2,274.6 L851.2,272.8 L852.1,271.0 L853.0,269.2 L853.9,267.5 L854.9,265.7 L855.8,263.9 L856.7,262.1 L857.7,260.4 L858.6,258.6 L859.6,256.8 L860.5,255.0 L861.5,253.3 L862.5,251.5 L863.4,249.7 L864.4,248.0 L865.4,246.2 L866.3,244.5 L867.3,242.7 L868.3,240.9 L869.3,239.2 L870.3,237.4 L871.2,235.7 L872.2,233.9 L873.2,232.2 L874.2,230.4 L875.2,228.7 L876.2,227.0 L877.2,225.2 L878.3,223.5 L879.3,221.7 L880.3,220.0 L881.3,218.3 L882.3,216.5 L883.4,214.8 L884.4,213.1 L885.4,211.3 L886.4,209.6 L887.5,207.9 L888.5,206.2 L889.6,204.5 L890.6,202.7 L891.7,201.0 L892.7,199.3 L893.8,197.6 L894.8,195.9 L895.9,194.2 L896.9,192.5 L898.0,190.8 L899.1,189.1 L900.1,187.4 L901.2,185.7 L902.3,184.0 L903.4,182.3 L904.4,180.6 L905.5,178.9 L906.6,177.2 L907.7,175.5 L908.8,173.8 L909.9,172.1 L911.0,170.4 L912.1,168.8 L913.2,167.1 L914.3,165.4 L915.4,163.7 L916.5,162.0 L917.6,160.4 L918.7,158.7 L919.8,157.0 L921.0,155.4 L922.1,153.7 L923.2,152.0 L924.3,150.4 L925.5,148.7 L926.6,147.0 L927.7,145.4 L928.8,143.7 L930.0,142.1 L931.1,140.4 L932.3,138.8 L933.4,137.1 L934.6,135.5 L935.7,133.8 L936.9,132.2 L938.0,130.6 L939.2,128.9 L940.3,127.3 L941.5,125.7 L942.6,124.0 L943.8,122.4 L945.0,120.8 L946.1,119.1 L947.3,117.5 L948.5,115.9 L949.6,114.3 L950.8,112.7 L952.0,111.0 L953.2,109.4 L954.4,107.8 L955.5,106.2 L956.7,104.6 L957.9,103.0 L959.1,101.4 L960.3,99.8 L961.5,98.2 L962.7,96.6 L963.9,95.0 L965.1,93.4 L966.3,91.8 L967.5,90.2 L968.7,88.6 L969.9,87.0 L970.7,85.0 L970.7,70 L1022.7,70 L1022.7,85.0 L1021.1,86.3 L1019.7,87.8 L1018.3,89.3 L1016.9,90.7 L1015.6,92.2 L1014.2,93.7 L1012.8,95.2 L1011.5,96.8 L1010.1,98.3 L1008.8,99.8 L1007.4,101.3 L1006.1,102.8 L1004.8,104.3 L1003.4,105.9 L1002.1,107.4 L1000.8,108.9 L999.4,110.5 L998.1,112.0 L996.8,113.5 L995.5,115.1 L994.2,116.6 L992.9,118.2 L991.6,119.8 L990.3,121.3 L989.0,122.9 L987.7,124.4 L986.4,126.0 L985.1,127.6 L983.9,129.2 L982.6,130.7 L981.3,132.3 L980.0,133.9 L978.8,135.5 L977.5,137.1 L976.2,138.7 L975.0,140.3 L973.7,141.9 L972.5,143.5 L971.2,145.1 L970.0,146.7 L968.8,148.3 L967.5,149.9 L966.3,151.5 L965.0,153.1 L963.8,154.7 L962.6,156.3 L961.4,158.0 L960.1,159.6 L958.9,161.2 L957.7,162.8 L956.5,164.5 L955.3,166.1 L954.1,167.7 L952.9,169.4 L951.7,171.0 L950.5,172.7 L949.3,174.3 L948.1,175.9 L946.9,177.6 L945.7,179.2 L944.5,180.9 L943.3,182.5 L942.2,184.2 L941.0,185.8 L939.8,187.5 L938.6,189.2 L937.5,190.8 L936.3,192.5 L935.1,194.1 L934.0,195.8 L932.8,197.5 L931.6,199.1 L930.5,200.8 L929.3,202.5 L928.2,204.2 L927.0,205.8 L925.9,207.5 L924.7,209.2 L923.6,210.9 L922.4,212.5 L921.3,214.2 L920.1,215.9 L919.0,217.6 L917.9,219.3 L916.7,221.0 L915.6,222.6 L914.5,224.3 L913.3,226.0 L912.2,227.7 L911.1,229.4 L909.9,231.1 L908.8,232.8 L907.7,234.5 L906.6,236.1 L905.5,237.8 L904.3,239.5 L903.2,241.2 L902.1,242.9 L901.0,244.6 L899.9,246.3 L898.8,248.0 L897.7,249.7 L896.5,251.4 L895.4,253.1 L894.3,254.8 L893.2,256.5 L892.1,258.2 L891.0,259.9 L889.9,261.6 L888.8,263.3 L887.7,265.0 L886.9,266.9 L886.9,266.9 L888.0,265.2 L889.3,263.7 L890.6,262.1 L891.9,260.6 L893.2,259.1 L894.5,257.6 L895.8,256.0 L897.2,254.5 L898.5,253.0 L899.8,251.5 L901.2,250.0 L902.5,248.5 L903.8,247.0 L905.2,245.5 L906.5,244.0 L907.9,242.5 L909.3,241.0 L910.6,239.6 L912.0,238.1 L913.4,236.6 L914.7,235.1 L916.1,233.7 L917.5,232.2 L918.9,230.8 L920.3,229.3 L921.7,227.9 L923.1,226.4 L924.5,225.0 L925.9,223.5 L927.3,222.1 L928.8,220.7 L930.2,219.3 L931.6,217.8 L933.1,216.4 L934.5,215.0 L935.9,213.6 L937.4,212.2 L938.8,210.8 L940.3,209.4 L941.7,208.0 L943.2,206.6 L944.7,205.2 L946.2,203.9 L947.6,202.5 L949.1,201.1 L950.6,199.8 L952.1,198.4 L953.6,197.0 L955.1,195.7 L956.6,194.3 L958.1,193.0 L959.6,191.7 L961.1,190.3 L962.6,189.0 L964.1,187.7 L965.7,186.4 L967.2,185.1 L968.7,183.8 L970.3,182.5 L971.8,181.2 L973.3,179.9 L974.9,178.6 L976.5,177.3 L978.0,176.0 L979.6,174.8 L981.1,173.5 L982.7,172.2 L984.3,171.0 L985.9,169.7 L987.4,168.5 L989.0,167.2 L990.6,166.0 L992.2,164.8 L993.8,163.5 L995.4,162.3 L997.0,161.1 L998.6,159.9 L1000.2,158.7 L1001.9,157.5 L1003.5,156.3 L1005.1,155.1 L1006.7,153.9 L1008.4,152.8 L1010.0,151.6 L1011.6,150.4 L1013.3,149.3 L1014.9,148.1 L1016.6,147.0 L1018.3,145.8 L1019.9,144.7 L1021.6,143.6 L1023.2,142.5 L1024.9,141.3 L1026.6,140.2 L1028.3,139.1 L1030.0,138.0 L1031.7,136.9 L1033.3,135.9 L1035.0,134.8 L1036.7,133.7 L1038.4,132.6 L1040.1,131.6 L1041.9,130.5 L1043.6,129.5 L1045.3,128.4 L1047.0,127.4 L1048.7,126.4 L1050.5,125.3 L1052.2,124.3 L1053.9,123.3 L1055.7,122.3 L1057.4,121.3 L1059.2,120.3 L1060.9,119.3 L1062.7,118.4 L1064.4,117.4 L1066.2,116.4 L1068.0,115.5 L1069.7,114.5 L1071.5,113.6 L1073.3,112.6 L1075.1,111.7 L1076.9,110.8 L1078.7,109.9 L1080.5,109.0 L1082.2,108.0 L1084.0,107.2 L1085.9,106.3 L1087.7,105.4 L1089.5,104.5 L1091.3,103.6 L1093.1,102.8 L1094.9,101.9 L1096.8,101.1 L1098.6,100.2 L1100.4,99.4 L1102.3,98.6 L1104.1,97.8 L1105.9,97.0 L1107.8,96.2 L1109.6,95.4 L1111.5,94.6 L1113.4,93.8 L1115.2,93.0 L1117.1,92.2 L1118.9,91.5 L1120.8,90.7 L1122.7,90.0 L1124.6,89.3 L1126.5,88.5 L1128.3,87.8 L1130.2,87.1 L1132.1,86.4 L1133.7,85.0 L1133.7,70 L1650,70 L1650,172.0 L1469.7,170.0 L1467.9,169.9 L1466.0,169.1 L1464.1,168.2 L1462.2,167.4 L1460.4,166.6 L1458.5,165.8 L1456.6,165.1 L1454.7,164.3 L1452.8,163.5 L1450.9,162.8 L1449.0,162.0 L1447.1,161.3 L1445.3,160.6 L1443.4,159.9 L1441.4,159.2 L1439.5,158.5 L1437.6,157.8 L1435.7,157.1 L1433.8,156.4 L1431.9,155.8 L1430.0,155.1 L1428.1,154.5 L1426.1,153.8 L1424.2,153.2 L1422.3,152.6 L1420.4,152.0 L1418.4,151.4 L1416.5,150.8 L1414.6,150.2 L1412.6,149.7 L1410.7,149.1 L1408.8,148.6 L1406.8,148.0 L1404.9,147.5 L1402.9,147.0 L1401.0,146.4 L1399.1,145.9 L1397.1,145.4 L1395.2,145.0 L1393.2,144.5 L1391.2,144.0 L1389.3,143.6 L1387.3,143.1 L1385.4,142.7 L1383.4,142.2 L1381.5,141.8 L1379.5,141.4 L1377.5,141.0 L1375.6,140.6 L1373.6,140.2 L1371.6,139.8 L1369.7,139.4 L1367.7,139.1 L1365.7,138.7 L1363.7,138.4 L1361.8,138.0 L1359.8,137.7 L1357.8,137.4 L1355.8,137.1 L1353.9,136.8 L1351.9,136.5 L1349.9,136.2 L1347.9,135.9 L1345.9,135.7 L1343.9,135.4 L1342.0,135.2 L1340.0,134.9 L1338.0,134.7 L1336.0,134.5 L1334.0,134.2 L1332.0,134.0 L1330.0,133.8 L1328.0,133.6 L1326.0,133.5 L1324.1,133.3 L1322.1,133.1 L1320.1,133.0 L1318.1,132.8 L1316.1,132.7 L1314.1,132.6 L1312.1,132.4 L1310.1,132.3 L1308.1,132.2 L1306.1,132.1 L1304.1,132.0 L1302.1,132.0 L1300.1,131.9 L1298.1,131.8 L1296.1,131.8 L1294.1,131.7 L1292.1,131.7 L1290.1,131.6 L1288.1,131.6 L1286.1,131.6 L1284.1,131.6 L1282.1,131.6 L1280.1,131.6 L1278.1,131.6 L1276.1,131.7 L1274.1,131.7 L1272.1,131.7 L1270.1,131.8 L1268.1,131.9 L1266.1,131.9 L1264.1,132.0 L1262.1,132.1 L1260.1,132.2 L1258.1,132.3 L1256.1,132.4 L1254.1,132.5 L1252.1,132.6 L1250.1,132.8 L1248.1,132.9 L1246.1,133.1 L1244.1,133.2 L1242.1,133.4 L1240.1,133.5 L1238.2,133.7 L1236.2,133.9 L1234.2,134.1 L1232.2,134.3 L1230.2,134.5 L1228.2,134.7 L1226.2,135.0 L1224.2,135.2 L1222.2,135.5 L1220.2,135.7 L1218.2,136.0 L1216.3,136.2 L1214.3,136.5 L1212.3,136.8 L1210.3,137.1 L1208.3,137.4 L1206.3,137.7 L1204.4,138.0 L1202.4,138.3 L1200.4,138.6 L1198.4,139.0 L1196.4,139.3 L1194.5,139.7 L1192.5,140.0 L1190.5,140.4 L1188.6,140.8 L1186.6,141.2 L1184.6,141.6 L1182.6,141.9 L1180.7,142.4 L1178.7,142.8 L1176.8,143.2 L1174.8,143.6 L1172.8,144.0 L1170.9,144.5 L1168.9,144.9 L1167.0,145.4 L1165.0,145.9 L1163.1,146.3 L1161.1,146.8 L1159.2,147.3 L1157.2,147.8 L1155.3,148.3 L1153.3,148.8 L1151.4,149.3 L1149.4,149.8 L1147.5,150.4 L1145.6,150.9 L1143.6,151.5 L1141.7,152.0 L1139.8,152.6 L1137.8,153.1 L1135.9,153.7 L1134.0,154.3 L1132.1,154.9 L1130.1,155.5 L1128.2,156.1 L1126.3,156.7 L1124.4,157.3 L1122.5,157.9 L1120.6,158.6 L1118.7,159.2 L1116.7,159.9 L1114.8,160.5 L1112.9,161.2 L1111.0,161.8 L1109.1,162.5 L1107.3,163.2 L1105.4,163.9 L1103.5,164.6 L1101.6,165.3 L1099.7,166.0 L1097.8,166.7 L1095.9,167.4 L1094.1,168.2 L1092.2,168.9 L1090.3,169.7 L1088.5,170.4 L1086.6,171.2 L1084.7,171.9 L1082.9,172.7 L1081.0,173.5 L1079.2,174.3 L1077.3,175.1 L1075.5,175.9 L1073.6,176.7 L1071.8,177.5 L1069.9,178.3 L1068.1,179.1 L1066.3,180.0 L1064.4,180.8 L1062.6,181.7 L1060.8,182.5 L1059.0,183.4 L1057.1,184.2 L1055.3,185.1 L1053.5,186.0 L1051.7,186.9 L1049.9,187.8 L1048.1,188.7 L1046.3,189.6 L1044.5,190.5 L1042.7,191.4 L1040.9,192.3 L1039.2,193.3 L1037.4,194.2 L1035.6,195.2 L1033.8,196.1 L1032.0,197.1 L1030.3,198.0 L1028.5,199.0 L1026.8,200.0 L1025.0,201.0 L1023.3,202.0 L1021.5,203.0 L1019.8,204.0 L1018.0,205.0 L1016.3,206.0 L1014.6,207.0 L1012.8,208.1 L1011.1,209.1 L1009.4,210.1 L1007.7,211.2 L1005.9,212.2 L1004.2,213.3 L1002.5,214.4 L1000.8,215.4 L999.1,216.5 L997.4,217.6 L995.8,218.7 L994.1,219.8 L992.4,220.9 L990.7,222.0 L989.0,223.1 L987.4,224.3 L985.7,225.4 L984.1,226.5 L982.4,227.7 L980.8,228.8 L979.1,230.0 L977.5,231.1 L975.8,232.3 L974.2,233.5 L972.6,234.7 L971.0,235.8 L969.3,237.0 L967.7,238.2 L966.1,239.4 L964.5,240.6 L962.9,241.9 L961.3,243.1 L959.7,244.3 L958.1,245.5 L956.6,246.8 L955.0,248.0 L953.4,249.3 L951.9,250.5 L950.3,251.8 L948.7,253.1 L947.2,254.3 L945.6,255.6 L944.1,256.9 L942.6,258.2 L941.0,259.5 L939.5,260.8 L938.0,262.1 L936.5,263.4 L935.0,264.7 L933.5,266.1 L932.0,267.4 L930.5,268.7 L929.0,270.1 L927.5,271.4 L926.0,272.8 L924.6,274.1 L923.1,275.5 L921.6,276.9 L920.2,278.3 L918.7,279.6 L917.3,281.0 L915.9,282.4 L914.4,283.8 L913.0,285.2 L911.6,286.6 L910.2,288.0 L908.7,289.5 L907.3,290.9 L905.9,292.3 L904.6,293.8 L903.2,295.2 L901.8,296.7 L900.4,298.1 L899.0,299.6 L897.7,301.0 L896.3,302.5 L895.0,304.0 L893.6,305.5 L892.3,306.9 L891.0,308.4 L889.6,309.9 L888.3,311.4 L887.0,312.9 L885.7,314.5 L884.4,316.0 L883.1,317.5 L881.8,319.0 L880.5,320.6 L879.2,322.1 L878.0,323.6 L876.7,325.2 L875.5,326.7 L874.2,328.3 L873.0,329.9 L871.7,331.4 L870.5,333.0 L869.3,334.6 L868.1,336.2 L866.8,337.8 L865.6,339.4 L864.4,341.0 L863.3,342.6 L862.1,344.2 L860.9,345.8 L859.7,347.4 L858.6,349.0 L857.4,350.7 L856.3,352.3 L855.1,353.9 L854.0,355.6 L852.8,357.2 L851.7,358.9 L850.6,360.5 L849.5,362.2 L848.4,363.9 L847.3,365.6 L846.2,367.2 L845.1,368.9 L844.1,370.6 L843.0,372.3 L841.9,374.0 L840.9,375.7 L839.9,377.4 L838.8,379.1 L837.8,380.8 L836.8,382.6 L835.8,384.3 L834.7,386.0 L833.8,387.8 L832.8,389.5 L831.8,391.2 L830.8,393.0 L829.8,394.7 L828.9,396.5 L827.9,398.3 L827.0,400.0 L826.0,401.8 L825.1,403.6 L824.2,405.4 L823.3,407.1 L822.4,408.9 L821.5,410.7 L820.6,412.5 L819.7,414.3 L818.8,416.1 L818.0,418.0 L817.1,419.8 L816.2,421.6 L815.4,423.4 L814.6,425.3 L813.7,427.1 L812.9,428.9 L812.1,430.8 L811.3,432.6 L810.5,434.5 L809.7,436.3 L809.0,438.2 L808.2,440.1 L807.4,441.9 L806.7,443.8 L805.9,445.7 L805.2,447.6 L804.5,449.5 L803.7,451.3 L803.0,453.2 L802.3,455.1 L801.6,457.0 L801.0,459.0 L800.3,460.9 L799.6,462.8 L799.0,464.7 L798.3,466.6 L797.7,468.6 L797.0,470.5 L796.4,472.4 L795.8,474.4 L795.2,476.3 L794.6,478.3 L794.0,479.9 L794.0,479.9 L793.5,481.8 L793.3,483.9 L793.1,485.9 L792.9,488.0 L792.7,490.0 L792.5,492.1 L792.4,494.1 L792.2,496.1 L792.1,498.1 L791.9,500.1 L791.8,502.2 L791.7,504.2 L791.6,506.2 L791.5,508.2 L791.4,510.2 L791.3,512.2 L791.3,514.2 L791.2,516.1 L791.1,518.1 L791.1,520.1 L791.0,522.1 L791.0,524.1 L791.0,526.1 L790.9,528.0 L790.9,530.0 L790.9,532.0 L790.9,534.0 L790.9,535.9 L790.9,537.9 L790.9,539.9 L790.9,541.9 L791.0,543.9 L791.0,545.8 L791.0,547.8 L791.1,549.8 L791.1,551.8 L791.2,553.8 L791.2,555.8 L791.3,557.8 L791.3,559.8 L791.4,561.8 L791.5,563.8 L791.6,565.8 L791.6,567.8 L791.7,569.9 L791.8,571.9 L791.9,573.9 L792.0,575.9 L792.1,578.0 L792.2,580.0 L792.3,582.1 L792.4,584.1 L792.5,586.2 L792.6,588.3 L792.7,590.4 L792.8,592.4 L792.9,594.5 L792.9,596.6 L793.0,598.7 L793.0,600.8 L793.0,602.8 L793.0,604.9 L793.0,607.0 L793.0,609.0 L792.9,611.1 L792.8,613.1 L792.6,615.2 L792.4,617.2 L792.2,619.2 L791.9,621.2 L791.6,623.2 L791.3,625.2 L790.8,627.1 L790.4,629.1 L789.9,631.0 L789.3,632.9 L788.7,634.8 L788.0,636.6 L787.2,638.5 L786.4,640.3 L785.5,642.1 L784.5,643.8 L783.5,645.6 L782.4,647.3 L781.2,649.0 L779.9,650.6 L778.6,652.2 L777.2,653.7 L775.7,655.2 L774.2,656.6 L772.7,657.9 L771.0,659.1 L769.4,660.3 L767.7,661.3 L765.9,662.2 L764.1,663.0 L762.3,663.7 L760.4,664.2 L758.5,664.7 L756.6,664.9 L754.7,665.0 L752.7,665.0 L750.7,664.7 L748.8,664.4 L746.9,663.9 L745.0,663.3 L743.1,662.5 L741.3,661.6 L739.6,660.7 L738.0,659.6 L736.5,658.4 L735.0,657.2 L733.7,655.9 L732.3,654.4 L731.1,653.0 L729.9,651.4 L728.9,649.8 L727.8,648.1 L726.9,646.3 L725.9,644.5 L725.1,642.7 L724.3,640.8 L723.5,638.9 L722.9,636.9 L722.2,634.9 L721.6,632.9 L721.1,630.9 L720.5,628.8 L720.1,626.7 L719.6,624.7 L719.2,622.6 L718.8,620.5 L718.5,618.5 L718.2,616.4 L717.9,614.3 L717.6,612.3 L717.4,610.2 L717.2,608.2 L717.0,606.2 L716.8,604.1 L716.7,602.1 L716.6,600.1 L716.5,598.0 L716.4,596.0 L716.3,594.0 L716.3,592.0 L716.3,590.0 L716.3,587.9 L716.3,585.9 L716.3,583.9 L716.3,581.9 L716.4,579.9 L716.4,577.9 L716.5,575.9 L716.6,573.9 L716.7,571.9 L716.8,569.9 L716.9,567.9 L717.0,566.0 L717.1,564.0 L717.2,562.0 L717.4,560.0 L717.5,558.0 L717.6,556.0 L717.8,554.0 L717.9,552.1 L718.0,550.1 L718.2,548.1 L718.3,546.1 L718.4,544.1 L718.5,542.1 L718.7,540.1 L718.8,538.2 L718.9,536.2 L719.0,534.2 L719.1,532.2 L719.2,530.2 L719.2,528.2 L719.3,526.2 L719.3,524.2 L719.4,522.2 L719.4,520.2 L719.4,518.2 L719.4,516.2 L719.3,514.2 L719.3,512.2 L719.2,510.2 L719.2,508.2 L719.1,506.2 L718.9,504.2 L718.8,502.2 L718.6,500.1 L718.4,498.1 L718.2,496.1 L718.0,494.0 L717.7,492.0 L717.4,490.0 L717.1,487.9 L716.7,485.9 L716.4,483.8 L715.9,481.8 L715.7,479.9 L715.7,479.9 L715.1,478.3 L714.5,476.3 L713.9,474.4 L713.3,472.4 L712.7,470.5 L712.0,468.6 L711.4,466.6 L710.7,464.7 L710.1,462.8 L709.4,460.9 L708.7,459.0 L708.1,457.0 L707.4,455.1 L706.7,453.2 L706.0,451.3 L705.2,449.5 L704.5,447.6 L703.8,445.7 L703.0,443.8 L702.3,441.9 L701.5,440.1 L700.7,438.2 L700.0,436.3 L699.2,434.5 L698.4,432.6 L697.6,430.8 L696.8,428.9 L696.0,427.1 L695.1,425.3 L694.3,423.4 L693.5,421.6 L692.6,419.8 L691.7,418.0 L690.9,416.1 L690.0,414.3 L689.1,412.5 L688.2,410.7 L687.3,408.9 L686.4,407.1 L685.5,405.4 L684.6,403.6 L683.7,401.8 L682.7,400.0 L681.8,398.3 L680.8,396.5 L679.9,394.7 L678.9,393.0 L677.9,391.2 L676.9,389.5 L675.9,387.8 L675.0,386.0 L673.9,384.3 L672.9,382.6 L671.9,380.8 L670.9,379.1 L669.8,377.4 L668.8,375.7 L667.8,374.0 L666.7,372.3 L665.6,370.6 L664.6,368.9 L663.5,367.2 L662.4,365.6 L661.3,363.9 L660.2,362.2 L659.1,360.5 L658.0,358.9 L656.9,357.2 L655.7,355.6 L654.6,353.9 L653.4,352.3 L652.3,350.7 L651.1,349.0 L650.0,347.4 L648.8,345.8 L647.6,344.2 L646.4,342.6 L645.3,341.0 L644.1,339.4 L642.9,337.8 L641.6,336.2 L640.4,334.6 L639.2,333.0 L638.0,331.4 L636.7,329.9 L635.5,328.3 L634.2,326.7 L633.0,325.2 L631.7,323.6 L630.5,322.1 L629.2,320.6 L627.9,319.0 L626.6,317.5 L625.3,316.0 L624.0,314.5 L622.7,312.9 L621.4,311.4 L620.1,309.9 L618.7,308.4 L617.4,306.9 L616.1,305.5 L614.7,304.0 L613.4,302.5 L612.0,301.0 L610.7,299.6 L609.3,298.1 L607.9,296.7 L606.5,295.2 L605.1,293.8 L603.8,292.3 L602.4,290.9 L601.0,289.5 L599.5,288.0 L598.1,286.6 L596.7,285.2 L595.3,283.8 L593.8,282.4 L592.4,281.0 L591.0,279.6 L589.5,278.3 L588.1,276.9 L586.6,275.5 L585.1,274.1 L583.7,272.8 L582.2,271.4 L580.7,270.1 L579.2,268.7 L577.7,267.4 L576.2,266.1 L574.7,264.7 L573.2,263.4 L571.7,262.1 L570.2,260.8 L568.7,259.5 L567.1,258.2 L565.6,256.9 L564.1,255.6 L562.5,254.3 L561.0,253.1 L559.4,251.8 L557.8,250.5 L556.3,249.3 L554.7,248.0 L553.1,246.8 L551.6,245.5 L550.0,244.3 L548.4,243.1 L546.8,241.9 L545.2,240.6 L543.6,239.4 L542.0,238.2 L540.4,237.0 L538.7,235.8 L537.1,234.7 L535.5,233.5 L533.9,232.3 L532.2,231.1 L530.6,230.0 L528.9,228.8 L527.3,227.7 L525.6,226.5 L524.0,225.4 L522.3,224.3 L520.7,223.1 L519.0,222.0 L517.3,220.9 L515.6,219.8 L513.9,218.7 L512.3,217.6 L510.6,216.5 L508.9,215.4 L507.2,214.4 L505.5,213.3 L503.8,212.2 L502.0,211.2 L500.3,210.1 L498.6,209.1 L496.9,208.1 L495.1,207.0 L493.4,206.0 L491.7,205.0 L489.9,204.0 L488.2,203.0 L486.4,202.0 L484.7,201.0 L482.9,200.0 L481.2,199.0 L479.4,198.0 L477.7,197.1 L475.9,196.1 L474.1,195.2 L472.3,194.2 L470.5,193.3 L468.8,192.3 L467.0,191.4 L465.2,190.5 L463.4,189.6 L461.6,188.7 L459.8,187.8 L458.0,186.9 L456.2,186.0 L454.4,185.1 L452.6,184.2 L450.7,183.4 L448.9,182.5 L447.1,181.7 L445.3,180.8 L443.4,180.0 L441.6,179.1 L439.8,178.3 L437.9,177.5 L436.1,176.7 L434.2,175.9 L432.4,175.1 L430.5,174.3 L428.7,173.5 L426.8,172.7 L425.0,171.9 L423.1,171.2 L421.2,170.4 L419.4,169.7 L417.5,168.9 L415.6,168.2 L413.8,167.4 L411.9,166.7 L410.0,166.0 L408.1,165.3 L406.2,164.6 L404.3,163.9 L402.4,163.2 L400.6,162.5 L398.7,161.8 L396.8,161.2 L394.9,160.5 L393.0,159.9 L391.0,159.2 L389.1,158.6 L387.2,157.9 L385.3,157.3 L383.4,156.7 L381.5,156.1 L379.6,155.5 L377.6,154.9 L375.7,154.3 L373.8,153.7 L371.9,153.1 L369.9,152.6 L368.0,152.0 L366.1,151.5 L364.1,150.9 L362.2,150.4 L360.3,149.8 L358.3,149.3 L356.4,148.8 L354.4,148.3 L352.5,147.8 L350.5,147.3 L348.6,146.8 L346.6,146.3 L344.7,145.9 L342.7,145.4 L340.8,144.9 L338.8,144.5 L336.9,144.0 L334.9,143.6 L332.9,143.2 L331.0,142.8 L329.0,142.4 L327.1,141.9 L325.1,141.6 L323.1,141.2 L321.1,140.8 L319.2,140.4 L317.2,140.0 L315.2,139.7 L313.3,139.3 L311.3,139.0 L309.3,138.6 L307.3,138.3 L305.3,138.0 L303.4,137.7 L301.4,137.4 L299.4,137.1 L297.4,136.8 L295.4,136.5 L293.4,136.2 L291.5,136.0 L289.5,135.7 L287.5,135.5 L285.5,135.2 L283.5,135.0 L281.5,134.7 L279.5,134.5 L277.5,134.3 L275.5,134.1 L273.5,133.9 L271.5,133.7 L269.6,133.5 L267.6,133.4 L265.6,133.2 L263.6,133.1 L261.6,132.9 L259.6,132.8 L257.6,132.6 L255.6,132.5 L253.6,132.4 L251.6,132.3 L249.6,132.2 L247.6,132.1 L245.6,132.0 L243.6,131.9 L241.6,131.9 L239.6,131.8 L237.6,131.7 L235.6,131.7 L233.6,131.7 L231.6,131.6 L229.6,131.6 L227.6,131.6 L225.6,131.6 L223.6,131.6 L221.6,131.6 L219.6,131.6 L217.6,131.7 L215.6,131.7 L213.6,131.8 L211.6,131.8 L209.6,131.9 L207.6,132.0 L205.6,132.0 L203.6,132.1 L201.6,132.2 L199.6,132.3 L197.6,132.4 L195.6,132.6 L193.6,132.7 L191.6,132.8 L189.6,133.0 L187.6,133.1 L185.6,133.3 L183.7,133.5 L181.7,133.6 L179.7,133.8 L177.7,134.0 L175.7,134.2 L173.7,134.5 L171.7,134.7 L169.7,134.9 L167.7,135.2 L165.8,135.4 L163.8,135.7 L161.8,135.9 L159.8,136.2 L157.8,136.5 L155.8,136.8 L153.9,137.1 L151.9,137.4 L149.9,137.7 L147.9,138.0 L146.0,138.4 L144.0,138.7 L142.0,139.1 L140.0,139.4 L138.1,139.8 L136.1,140.2 L134.1,140.6 L132.2,141.0 L130.2,141.4 L128.2,141.8 L126.3,142.2 L124.3,142.7 L122.4,143.1 L120.4,143.6 L118.5,144.0 L116.5,144.5 L114.5,145.0 L112.6,145.4 L110.6,145.9 L108.7,146.4 L106.8,147.0 L104.8,147.5 L102.9,148.0 L100.9,148.6 L99.0,149.1 L97.1,149.7 L95.1,150.2 L93.2,150.8 L91.3,151.4 L89.3,152.0 L87.4,152.6 L85.5,153.2 L83.6,153.8 L81.6,154.5 L79.7,155.1 L77.8,155.8 L75.9,156.4 L74.0,157.1 L72.1,157.8 L70.2,158.5 L68.3,159.2 L66.3,159.9 L64.4,160.6 L62.6,161.3 L60.7,162.0 L58.8,162.8 L56.9,163.5 L55.0,164.3 L53.1,165.1 L51.2,165.8 L49.3,166.6 L47.5,167.4 L45.6,168.2 L43.7,169.1 L41.8,169.9 L40.0,170.0 L30,170 Z"/>
<path d="M1640,759 L1640.0,759.0 L1638.9,760.1 L1637.8,761.1 L1636.7,762.1 L1635.7,763.1 L1634.6,764.1 L1633.5,765.1 L1632.4,766.1 L1631.3,767.1 L1630.2,768.1 L1629.2,769.1 L1628.1,770.1 L1627.0,771.1 L1625.9,772.1 L1624.8,773.1 L1623.7,774.1 L1622.6,775.1 L1621.5,776.2 L1620.4,777.2 L1619.3,778.2 L1618.2,779.2 L1617.1,780.2 L1616.0,781.2 L1614.9,782.2 L1613.7,783.3 L1612.6,784.3 L1611.5,785.3 L1610.4,786.3 L1609.3,787.3 L1608.2,788.3 L1607.0,789.4 L1605.9,790.4 L1604.8,791.4 L1603.7,792.4 L1602.5,793.4 L1601.4,794.4 L1600.3,795.4 L1599.1,796.5 L1598.0,797.5 L1596.8,798.5 L1595.7,799.5 L1594.6,800.5 L1593.4,801.5 L1592.3,802.5 L1591.1,803.5 L1590.0,804.5 L1588.8,805.5 L1587.6,806.5 L1586.5,807.5 L1585.3,808.4 L1584.2,809.4 L1583.0,810.4 L1581.8,811.4 L1580.6,812.4 L1579.5,813.4 L1578.3,814.3 L1577.1,815.3 L1575.9,816.3 L1574.8,817.2 L1573.6,818.2 L1572.4,819.1 L1571.2,820.1 L1570.0,821.0 L1568.8,822.0 L1567.6,822.9 L1566.4,823.9 L1565.2,824.8 L1564.0,825.7 L1562.8,826.7 L1561.6,827.6 L1560.4,828.5 L1559.1,829.4 L1557.9,830.3 L1556.7,831.2 L1555.5,832.1 L1554.2,833.0 L1553.0,833.9 L1551.8,834.8 L1550.5,835.7 L1549.3,836.5 L1548.1,837.4 L1546.8,838.3 L1545.6,839.1 L1544.3,840.0 L1543.1,840.8 L1541.8,841.7 L1540.5,842.5 L1539.3,843.3 L1538.0,844.1 L1536.7,844.9 L1535.5,845.8 L1534.2,846.6 L1532.9,847.4 L1531.6,848.1 L1530.4,848.9 L1529.1,849.7 L1527.8,850.5 L1526.5,851.2 L1525.2,852.0 L1523.9,852.7 L1522.6,853.5 L1521.3,854.2 L1520.0,854.9 L1518.6,855.6 L1517.3,856.3 L1516.0,857.0 L1514.7,857.7 L1513.4,858.4 L1512.0,859.1 L1510.7,859.7 L1509.3,860.4 L1508.0,861.1 L1506.7,861.7 L1505.3,862.3 L1504.0,863.0 L1502.6,863.6 L1501.2,864.2 L1499.9,864.8 L1498.5,865.4 L1497.1,865.9 L1495.8,866.5 L1494.4,867.1 L1493.0,867.6 L1491.6,868.2 L1490.2,868.7 L1488.8,869.2 L1487.4,869.7 L1486.0,870.2 L1484.6,870.7 L1483.2,871.2 L1481.8,871.7 L1480.4,872.2 L1479.0,872.7 L1477.6,873.1 L1476.2,873.6 L1474.8,874.1 L1473.3,874.6 L1471.9,875.1 L1470.5,875.5 L1469.1,876.0 L1467.7,876.5 L1466.2,877.0 L1464.8,877.5 L1463.4,878.0 L1462.0,878.5 L1460.6,879.0 L1459.1,879.5 L1457.7,880.1 L1456.3,880.6 L1454.9,881.2 L1453.5,881.7 L1452.1,882.3 L1450.7,882.9 L1449.3,883.5 L1447.9,884.1 L1446.5,884.8 L1445.1,885.4 L1443.7,886.1 L1442.3,886.8 L1440.9,887.5 L1439.5,888.2 L1438.1,888.9 L1436.8,889.7 L1435.4,890.5 L1434.0,891.3 L1432.7,892.1 L1431.3,893.0 L1430.0,893.9 L1428.7,894.8 L1427.4,895.8 L1426.1,896.7 L1424.9,897.8 L1423.7,898.8 L1422.6,899.9 L1421.6,901.1 L1420.6,902.3 L1419.8,903.5 L1419.0,904.8 L1418.3,906.2 L1417.8,907.5 L1417.3,908.9 L1417.1,910.3 L1416.9,911.6 L1416.9,912.9 L1417.1,914.2 L1417.4,915.4 L1417.9,916.6 L1418.5,917.7 L1419.2,918.7 L1420.1,919.7 L1421.1,920.6 L1422.1,921.6 L1423.3,922.4 L1424.5,923.2 L1425.8,924.0 L1427.1,924.8 L1428.5,925.5 L1429.9,926.2 L1431.3,926.9 L1432.7,927.5 L1434.2,928.1 L1435.6,928.7 L1437.0,929.3 L1438.5,929.8 L1440.0,930.3 L1441.4,930.8 L1442.9,931.3 L1444.4,931.7 L1445.8,932.1 L1447.3,932.6 L1448.8,932.9 L1450.3,933.3 L1451.8,933.6 L1453.3,933.9 L1454.7,934.2 L1456.2,934.5 L1457.7,934.8 L1459.2,935.0 L1460.8,935.2 L1462.3,935.4 L1463.8,935.6 L1465.3,935.8 L1466.8,935.9 L1468.3,936.1 L1469.8,936.2 L1471.3,936.3 L1472.9,936.4 L1474.4,936.5 L1475.9,936.5 L1477.4,936.5 L1478.9,936.6 L1480.5,936.6 L1482.0,936.6 L1483.5,936.6 L1485.0,936.5 L1486.6,936.5 L1488.1,936.4 L1489.6,936.4 L1491.1,936.3 L1492.7,936.2 L1494.2,936.1 L1495.7,936.0 L1497.2,935.9 L1498.7,935.8 L1500.3,935.6 L1501.8,935.5 L1503.3,935.3 L1504.8,935.2 L1506.3,935.0 L1507.8,934.8 L1509.3,934.6 L1510.8,934.4 L1512.3,934.2 L1513.8,934.0 L1515.3,933.8 L1516.8,933.6 L1518.3,933.3 L1519.8,933.1 L1521.3,932.9 L1522.8,932.6 L1524.3,932.4 L1525.8,932.1 L1527.2,931.9 L1528.7,931.6 L1530.2,931.3 L1531.7,931.0 L1533.2,930.7 L1534.6,930.5 L1536.1,930.2 L1537.6,929.9 L1539.1,929.6 L1540.5,929.2 L1542.0,928.9 L1543.5,928.6 L1544.9,928.3 L1546.4,928.0 L1547.9,927.6 L1549.3,927.3 L1550.8,927.0 L1552.3,926.6 L1553.7,926.3 L1555.2,925.9 L1556.6,925.6 L1558.1,925.2 L1559.6,924.9 L1561.0,924.5 L1562.5,924.2 L1563.9,923.8 L1565.4,923.4 L1566.8,923.1 L1568.3,922.7 L1569.7,922.3 L1571.2,922.0 L1572.7,921.6 L1574.1,921.2 L1575.6,920.8 L1577.0,920.4 L1578.5,920.1 L1579.9,919.7 L1581.4,919.3 L1582.8,918.9 L1584.3,918.5 L1585.7,918.2 L1587.2,917.8 L1588.7,917.4 L1590.1,917.0 L1591.6,916.6 L1593.0,916.2 L1594.5,915.9 L1595.9,915.5 L1597.4,915.1 L1598.8,914.7 L1600.3,914.3 L1601.8,914.0 L1603.2,913.6 L1604.7,913.2 L1606.1,912.8 L1607.6,912.5 L1609.1,912.1 L1610.5,911.7 L1612.0,911.4 L1613.4,911.0 L1614.9,910.6 L1616.4,910.3 L1617.8,909.9 L1619.3,909.6 L1620.8,909.2 L1622.3,908.9 L1623.7,908.5 L1625.2,908.2 L1626.7,907.8 L1628.1,907.5 L1629.6,907.2 L1631.1,906.8 L1632.6,906.5 L1634.1,906.2 L1635.5,905.9 L1637.0,905.5 L1638.5,905.2 L1640.0,905.0 Z"/>
<path d="M-130.3,759 L-130.3,759.0 L-129.2,760.1 L-128.1,761.1 L-127.0,762.1 L-126.0,763.1 L-124.9,764.1 L-123.8,765.1 L-122.7,766.1 L-121.6,767.1 L-120.5,768.1 L-119.5,769.1 L-118.4,770.1 L-117.3,771.1 L-116.2,772.1 L-115.1,773.1 L-114.0,774.1 L-112.9,775.1 L-111.8,776.2 L-110.7,777.2 L-109.6,778.2 L-108.5,779.2 L-107.4,780.2 L-106.3,781.2 L-105.2,782.2 L-104.0,783.3 L-102.9,784.3 L-101.8,785.3 L-100.7,786.3 L-99.6,787.3 L-98.5,788.3 L-97.3,789.4 L-96.2,790.4 L-95.1,791.4 L-94.0,792.4 L-92.8,793.4 L-91.7,794.4 L-90.6,795.4 L-89.4,796.5 L-88.3,797.5 L-87.1,798.5 L-86.0,799.5 L-84.9,800.5 L-83.7,801.5 L-82.6,802.5 L-81.4,803.5 L-80.3,804.5 L-79.1,805.5 L-77.9,806.5 L-76.8,807.5 L-75.6,808.4 L-74.5,809.4 L-73.3,810.4 L-72.1,811.4 L-70.9,812.4 L-69.8,813.4 L-68.6,814.3 L-67.4,815.3 L-66.2,816.3 L-65.1,817.2 L-63.9,818.2 L-62.7,819.1 L-61.5,820.1 L-60.3,821.0 L-59.1,822.0 L-57.9,822.9 L-56.7,823.9 L-55.5,824.8 L-54.3,825.7 L-53.1,826.7 L-51.9,827.6 L-50.7,828.5 L-49.4,829.4 L-48.2,830.3 L-47.0,831.2 L-45.8,832.1 L-44.5,833.0 L-43.3,833.9 L-42.1,834.8 L-40.8,835.7 L-39.6,836.5 L-38.4,837.4 L-37.1,838.3 L-35.9,839.1 L-34.6,840.0 L-33.4,840.8 L-32.1,841.7 L-30.8,842.5 L-29.6,843.3 L-28.3,844.1 L-27.0,844.9 L-25.8,845.8 L-24.5,846.6 L-23.2,847.4 L-21.9,848.1 L-20.7,848.9 L-19.4,849.7 L-18.1,850.5 L-16.8,851.2 L-15.5,852.0 L-14.2,852.7 L-12.9,853.5 L-11.6,854.2 L-10.3,854.9 L-8.9,855.6 L-7.6,856.3 L-6.3,857.0 L-5.0,857.7 L-3.7,858.4 L-2.3,859.1 L-1.0,859.7 L0.4,860.4 L1.7,861.1 L3.0,861.7 L4.4,862.3 L5.7,863.0 L7.1,863.6 L8.5,864.2 L9.8,864.8 L11.2,865.4 L12.6,865.9 L13.9,866.5 L15.3,867.1 L16.7,867.6 L18.1,868.2 L19.5,868.7 L20.9,869.2 L22.3,869.7 L23.7,870.2 L25.1,870.7 L26.5,871.2 L27.9,871.7 L29.3,872.2 L30.7,872.7 L32.1,873.1 L33.5,873.6 L34.9,874.1 L36.4,874.6 L37.8,875.1 L39.2,875.5 L40.6,876.0 L42.0,876.5 L43.5,877.0 L44.9,877.5 L46.3,878.0 L47.7,878.5 L49.1,879.0 L50.6,879.5 L52.0,880.1 L53.4,880.6 L54.8,881.2 L56.2,881.7 L57.6,882.3 L59.0,882.9 L60.4,883.5 L61.8,884.1 L63.2,884.8 L64.6,885.4 L66.0,886.1 L67.4,886.8 L68.8,887.5 L70.2,888.2 L71.6,888.9 L72.9,889.7 L74.3,890.5 L75.7,891.3 L77.0,892.1 L78.4,893.0 L79.7,893.9 L81.0,894.8 L82.3,895.8 L83.6,896.7 L84.8,897.8 L86.0,898.8 L87.1,899.9 L88.1,901.1 L89.1,902.3 L89.9,903.5 L90.7,904.8 L91.4,906.2 L91.9,907.5 L92.4,908.9 L92.6,910.3 L92.8,911.6 L92.8,912.9 L92.6,914.2 L92.3,915.4 L91.8,916.6 L91.2,917.7 L90.5,918.7 L89.6,919.7 L88.6,920.6 L87.6,921.6 L86.4,922.4 L85.2,923.2 L83.9,924.0 L82.6,924.8 L81.2,925.5 L79.8,926.2 L78.4,926.9 L77.0,927.5 L75.5,928.1 L74.1,928.7 L72.7,929.3 L71.2,929.8 L69.7,930.3 L68.3,930.8 L66.8,931.3 L65.3,931.7 L63.9,932.1 L62.4,932.6 L60.9,932.9 L59.4,933.3 L57.9,933.6 L56.4,933.9 L55.0,934.2 L53.5,934.5 L52.0,934.8 L50.5,935.0 L48.9,935.2 L47.4,935.4 L45.9,935.6 L44.4,935.8 L42.9,935.9 L41.4,936.1 L39.9,936.2 L38.4,936.3 L36.8,936.4 L35.3,936.5 L33.8,936.5 L32.3,936.5 L30.8,936.6 L29.2,936.6 L27.7,936.6 L26.2,936.6 L24.7,936.5 L23.1,936.5 L21.6,936.4 L20.1,936.4 L18.6,936.3 L17.0,936.2 L15.5,936.1 L14.0,936.0 L12.5,935.9 L11.0,935.8 L9.4,935.6 L7.9,935.5 L6.4,935.3 L4.9,935.2 L3.4,935.0 L1.9,934.8 L0.4,934.6 L-1.1,934.4 L-2.6,934.2 L-4.1,934.0 L-5.6,933.8 L-7.1,933.6 L-8.6,933.3 L-10.1,933.1 L-11.6,932.9 L-13.1,932.6 L-14.6,932.4 L-16.1,932.1 L-17.5,931.9 L-19.0,931.6 L-20.5,931.3 L-22.0,931.0 L-23.5,930.7 L-24.9,930.5 L-26.4,930.2 L-27.9,929.9 L-29.4,929.6 L-30.8,929.2 L-32.3,928.9 L-33.8,928.6 L-35.2,928.3 L-36.7,928.0 L-38.2,927.6 L-39.6,927.3 L-41.1,927.0 L-42.6,926.6 L-44.0,926.3 L-45.5,925.9 L-46.9,925.6 L-48.4,925.2 L-49.9,924.9 L-51.3,924.5 L-52.8,924.2 L-54.2,923.8 L-55.7,923.4 L-57.1,923.1 L-58.6,922.7 L-60.0,922.3 L-61.5,922.0 L-63.0,921.6 L-64.4,921.2 L-65.9,920.8 L-67.3,920.4 L-68.8,920.1 L-70.2,919.7 L-71.7,919.3 L-73.1,918.9 L-74.6,918.5 L-76.0,918.2 L-77.5,917.8 L-79.0,917.4 L-80.4,917.0 L-81.9,916.6 L-83.3,916.2 L-84.8,915.9 L-86.2,915.5 L-87.7,915.1 L-89.1,914.7 L-90.6,914.3 L-92.1,914.0 L-93.5,913.6 L-95.0,913.2 L-96.4,912.8 L-97.9,912.5 L-99.4,912.1 L-100.8,911.7 L-102.3,911.4 L-103.7,911.0 L-105.2,910.6 L-106.7,910.3 L-108.1,909.9 L-109.6,909.6 L-111.1,909.2 L-112.6,908.9 L-114.0,908.5 L-115.5,908.2 L-117.0,907.8 L-118.4,907.5 L-119.9,907.2 L-121.4,906.8 L-122.9,906.5 L-124.4,906.2 L-125.8,905.9 L-127.3,905.5 L-128.8,905.2 L-130.3,905.0 Z"/>
</g>
<g fill="#fff" stroke="#0f7f3f" stroke-width="1">
<rect x="200.5" y="130.5" width="3" height="3"/><rect x="447.5" y="180.5" width="3" height="3"/><rect x="473.5" y="133.5" width="3" height="3"/>
<rect x="511.5" y="111.5" width="3" height="3"/><rect x="540.5" y="88.5" width="3" height="3"/><rect x="621.5" y="265.5" width="3" height="3"/>
<rect x="650.5" y="346.5" width="3" height="3"/><rect x="714.5" y="478.5" width="3" height="3"/><rect x="739.5" y="497.5" width="3" height="3"/>
<rect x="753.5" y="600.5" width="3" height="3"/>
<rect x="1306.5" y="130.5" width="3" height="3"/><rect x="1059.5" y="180.5" width="3" height="3"/><rect x="1033.5" y="133.5" width="3" height="3"/>
<rect x="995.5" y="111.5" width="3" height="3"/><rect x="966.5" y="88.5" width="3" height="3"/><rect x="885.5" y="265.5" width="3" height="3"/>
<rect x="856.5" y="346.5" width="3" height="3"/><rect x="792.5" y="478.5" width="3" height="3"/><rect x="767.5" y="497.5" width="3" height="3"/>
<rect x="1414.5" y="911.5" width="3" height="3"/><rect x="1490.5" y="867.5" width="3" height="3"/><rect x="1505.5" y="933.5" width="3" height="3"/>
<rect x="92.5" y="911.5" width="3" height="3"/>
</g>
<g stroke="#0f7f3f" stroke-width="1" fill="#0f7f3f">
<path d="M716,481 L733.4,534.3 M794,481 L778.4,534.3 M688,665.5 L822.8,665.5" fill="none"/>
<circle cx="733.4" cy="534.3" r="2.3" stroke="none"/><circle cx="778.4" cy="534.3" r="2.3" stroke="none"/>
<circle cx="688" cy="665.5" r="2.3" stroke="none"/><circle cx="822.8" cy="665.5" r="2.3" stroke="none"/>
<rect x="751.5" y="662.5" width="6" height="6" stroke="none"/>
</g>
</svg>
</div>
<!-- vertical scrollbar -->
<div class="a" style="left:1598px;top:85px;width:17px;height:938px;background:#3a3a3a"></div>
<svg style="left:1601px;top:1009px" width="12" height="8"><path d="M1,1 L11,1 L6,7 Z" fill="#c8c8c8"/></svg>
<div class="a" style="left:1615px;top:65px;width:2px;height:974px;background:#262626"></div>
<!-- status bar -->
<div class="a" style="left:72px;top:1023px;width:1543px;height:16px;background:#323232"></div>
<div class="a" style="left:74px;top:1023px;width:461px;height:16px;background:#4a4a4a"></div>
<div class="a" style="left:72px;top:1023px;width:1543px;height:1px;background:#262626"></div>
<svg style="left:80px;top:1025px" width="50" height="13"><rect x="1" y="1.5" width="18" height="10" rx="2" fill="#b4b4b4" stroke="#8a8a8a"/><circle cx="6.5" cy="6.5" r="3" fill="#2a2a2a"/><path d="M6.5,2 L6.5,11 M2,6.5 L11,6.5 M3.3,3.3 L9.7,9.7 M9.7,3.3 L3.3,9.7" stroke="#2a2a2a" stroke-width="1.3"/><circle cx="6.5" cy="6.5" r="1" fill="#b4b4b4"/><path d="M11.5,5.5 L14,3 M11.5,5.5 L14,8 M17.5,7.5 L15,5 M17.5,7.5 L15,10 M12,5.5 L17,7.5" stroke="#2a2a2a" stroke-width="1.2" fill="none"/><path d="M31.5,4.5 L31.5,11.5 L42.5,11.5 L42.5,9" fill="none" stroke="#c8c8c8" stroke-width="1.2"/><path d="M35,9 Q36,4.5 41,4.5 L41,2 L45,5.5 L41,9 L41,6.5 Q37.5,6.5 35,9 Z" fill="#c8c8c8"/></svg>
<div class="t" style="left:416px;top:1027px;font-size:10px;line-height:10px;color:#e0e0e0">Auswahl</div>
<div class="a" style="left:535px;top:1023px;width:1px;height:16px;background:#3a3a3a"></div>
<svg style="left:541px;top:1027px" width="8" height="10"><path d="M1,0 L7,5 L1,10 Z" fill="#c8c8c8"/></svg>
<div class="a" style="left:553px;top:1023px;width:1px;height:16px;background:#2a2a2a"></div>
<svg style="left:558px;top:1026px" width="8" height="10"><path d="M7,0 L1,5 L7,10 Z" fill="#c8c8c8"/></svg>
<div class="a" style="left:1069px;top:1024px;width:15px;height:15px;background:#898989"></div>
<svg style="left:1586px;top:1026px" width="8" height="10"><path d="M1,0 L7,5 L1,10 Z" fill="#c8c8c8"/></svg>
<div class="a" style="left:1598px;top:1024px;width:17px;height:15px;background:#4a4a4a"></div>
<!-- FLOATING ALIGN PANEL -->
<div class="a" style="left:134px;top:752px;width:232px;height:300px;box-shadow:0 0 4px 1px rgba(0,0,0,0.3);border-radius:4px 4px 0 0"></div>
<div class="a" style="left:134px;top:752px;width:232px;height:14px;background:#2b2b2b;border-radius:4px 4px 0 0"></div>
<svg style="left:337px;top:756px" width="8" height="7"><path d="M3.5,0 L0,3.5 L3.5,7 Z M8,0 L4.5,3.5 L8,7 Z" fill="#c8c8c8"/></svg>
<svg style="left:354px;top:756px" width="8" height="8"><path d="M1,1 L7,7 M7,1 L1,7" stroke="#e0e0e0" stroke-width="1.6"/></svg>
<div class="a" style="left:134px;top:766px;width:232px;height:17px;background:#303030"></div>
<div class="a" style="left:134px;top:767px;width:87px;height:16px;background:#383838"></div>
<div class="tab" style="left:142px;top:770px;background:none;color:#9c9c9c;font-size:10px">Transformieren</div>
<div class="a" style="left:221px;top:767px;width:70px;height:16px;background:#4a4a4a"></div>
<svg style="left:226px;top:769px" width="6" height="11"><path d="M0.5,4 L3,1 L5.5,4 M0.5,7 L3,10 L5.5,7" fill="none" stroke="#d8d8d8" stroke-width="1.1"/></svg>
<div class="tab" style="left:234px;top:770px;background:none;font-size:10px;color:#eeeeee">Ausrichten</div>
<svg style="left:348px;top:771px" width="14" height="8"><path d="M0,1.5 L4,1.5 L2,4 Z" fill="#d0d0d0"/><path d="M5,0.5 L14,0.5 M5,3 L14,3 M5,5.5 L14,5.5 M5,7.5 L14,7.5" stroke="#d0d0d0" stroke-width="0.9"/></svg>
<div class="a" style="left:134px;top:783px;width:232px;height:170px;background:#4a4a4a"></div>
<div class="t" style="left:140px;top:791px;font-size:10px;line-height:10px;color:#e0e0e0">Ankerpunkte ausrichten:</div>
<svg style="left:0;top:0" width="370" height="1039">
<g fill="#c8c8c8" stroke="#c8c8c8">
<!-- align row y 813-828 -->
<path d="M146.5,813 L146.5,828" stroke-width="1" fill="none"/><rect x="148" y="815" width="8" height="5" stroke="none"/><rect x="148.5" y="822.5" width="10" height="4" fill="none"/>
<path d="M188.5,812 L188.5,829" stroke-width="1" fill="none"/><rect x="184.5" y="815" width="8" height="5" stroke="none"/><rect x="183.5" y="822.5" width="10" height="4" fill="none"/>
<path d="M231.5,813 L231.5,828" fill="none"/><rect x="224" y="815" width="7" height="5" stroke="none"/><rect x="219.5" y="822.5" width="10" height="4" fill="none"/>
<path d="M268,813.5 L282,813.5" fill="none"/><rect x="268.5" y="815.5" width="4" height="11" fill="none"/><rect x="275" y="815" width="5" height="6" stroke="none"/>
<path d="M303,820.5 L319,820.5" fill="none"/><rect x="305.5" y="814.5" width="4" height="12" fill="#4a4a4a"/><rect x="312" y="817" width="5" height="7" stroke="none"/>
<path d="M340,828.5 L354,828.5" fill="none"/><rect x="340.5" y="815.5" width="4" height="11" fill="none"/><rect x="347" y="820" width="5" height="7" stroke="none"/>
<!-- distribute row y 870-885 -->
<path d="M145,870.5 L161,870.5 M145,877.5 L161,877.5" fill="none"/><rect x="149" y="871" width="8" height="4" stroke="none"/><rect x="148.5" y="879.5" width="9" height="4" fill="none"/>
<path d="M181,874.5 L197,874.5 M181,880.5 L197,880.5" fill="none"/><rect x="185" y="871.5" width="8" height="5" stroke="none"/><rect x="184.5" y="878.5" width="9" height="4" fill="none"/>
<path d="M217,877.5 L233,877.5 M217,884.5 L233,884.5" fill="none"/><rect x="221" y="871.5" width="8" height="5" stroke="none"/><rect x="220.5" y="880.5" width="9" height="4" fill="none"/>
<path d="M269.5,869 L269.5,886 M276.5,869 L276.5,886" fill="none"/><rect x="270.5" y="873.5" width="4" height="9" fill="none"/><rect x="277" y="874" width="5" height="7" stroke="none"/>
<path d="M305.5,869 L305.5,886 M311.5,869 L311.5,886" fill="none"/><rect x="302.5" y="873.5" width="4" height="9" fill="none"/><rect x="309" y="874" width="5" height="7" stroke="none"/>
<path d="M344.5,869 L344.5,886 M351.5,869 L351.5,886" fill="none"/><rect x="346.5" y="873.5" width="4" height="9" fill="none"/><rect x="339" y="874" width="5" height="7" stroke="none"/>
<!-- spacing row -->
<path d="M146,932.5 L150,932.5 M146,936.5 L150,936.5" fill="none"/><rect x="151" y="929" width="6" height="5" stroke="none"/><rect x="150.5" y="936.5" width="8" height="4" fill="none"/>
<path d="M183.5,927 L183.5,931 M186.5,927 L186.5,931" fill="none"/><rect x="178.5" y="932.5" width="4" height="10" fill="none"/><rect x="185" y="934" width="5" height="5" stroke="none"/>
<!-- align to -->
<rect x="302.5" y="929.5" width="9" height="9" fill="none" stroke-dasharray="1,1"/><rect x="304.5" y="931.5" width="5" height="5" fill="none"/>
<path d="M318,932 L324,932 L321,935.5 Z" stroke="none"/>
</g>
</svg>
<div class="a" style="left:140px;top:840px;width:220px;height:1px;background:#3c3c3c;border-bottom:1px solid #555"></div>
<div class="t" style="left:140px;top:848px;font-size:10px;line-height:10px;color:#e0e0e0">Ankerpunkte verteilen:</div>
<div class="a" style="left:140px;top:896px;width:220px;height:1px;background:#3c3c3c"></div>
<div class="t" style="left:140px;top:905px;font-size:10px;line-height:10px;color:#e0e0e0">Abstand verteilen:</div>
<div class="t" style="left:293px;top:906px;font-size:10px;line-height:10px;color:#e0e0e0">Ausrichten an:</div>
<div class="a" style="left:286px;top:903px;width:1px;height:45px;background:#3c3c3c"></div>
<div class="a" style="left:203px;top:925px;width:75px;height:19px;background:#3c3c3c;border:1px solid #363636"></div>
<div class="a" style="left:204px;top:926px;width:16px;height:17px;background:#555"></div>
<svg style="left:208px;top:928px" width="9" height="13"><path d="M1,5 L4.5,1.5 L8,5 Z M1,8 L4.5,11.5 L8,8 Z" fill="#777"/></svg>
<div class="a" style="left:220px;top:926px;width:57px;height:17px;background:#6a6a6a"></div>
<div class="t" style="left:224px;top:930px;font-size:10px;line-height:10px;color:#2a2a2a">0 mm</div>
<div class="a" style="left:134px;top:953px;width:232px;height:4px;background:#282828"></div>
<div class="a" style="left:134px;top:957px;width:232px;height:16px;background:#303030"></div>
<div class="a" style="left:134px;top:957px;width:65px;height:16px;background:#4a4a4a"></div>
<div class="tab" style="left:142px;top:960px;background:none;font-size:10px;color:#eeeeee">Pathfinder</div>
<svg style="left:347px;top:961px" width="14" height="8"><path d="M0,1.5 L4,1.5 L2,4 Z" fill="#d0d0d0"/><path d="M5,0.5 L14,0.5 M5,3 L14,3 M5,5.5 L14,5.5 M5,7.5 L14,7.5" stroke="#d0d0d0" stroke-width="0.9"/></svg>
<div class="a" style="left:134px;top:973px;width:232px;height:66px;background:#4a4a4a"></div>
<div class="t" style="left:140px;top:981px;font-size:10px;line-height:10px;color:#e0e0e0">Formmodi:</div>
<svg style="left:0;top:0" width="370" height="1039"><g stroke="#b4b4b4" fill="none">
<rect x="146.5" y="1004.5" width="8" height="8" fill="#7e7e7e"/><rect x="150.5" y="1008.5" width="8" height="8" fill="#8e8e8e"/>
<rect x="178.5" y="1004.5" width="8" height="8"/><rect x="182.5" y="1008.5" width="8" height="8" fill="#404040" stroke="#707070"/>
<rect x="210.5" y="1004.5" width="8" height="8"/><rect x="214.5" y="1008.5" width="8" height="8"/><rect x="214.5" y="1008.5" width="4" height="4" fill="#8e8e8e"/>
<rect x="243.5" y="1004.5" width="8" height="8" fill="#8e8e8e"/><rect x="247.5" y="1008.5" width="8" height="8"/><rect x="247.5" y="1008.5" width="4" height="4" fill="#4a4a4a"/>
</g></svg>
<div class="a" style="left:271px;top:1001px;width:88px;height:19px;background:#474747;border:1px solid #383838"></div>
<div class="t" style="left:288px;top:1006px;font-size:10px;line-height:10px;color:#8e8e8e">Umwandeln</div>
<div class="t" style="left:140px;top:1032px;font-size:10px;line-height:10px;color:#e0e0e0">Pathfinder:</div>
<!-- EBENEN PANEL -->
<div class="a" style="left:1385px;top:74px;width:231px;height:624px;box-shadow:0 1px 5px 1px rgba(0,0,0,0.25)"></div>
<div class="a" style="left:1385px;top:74px;width:231px;height:4px;background:#232323"></div>
<div class="a" style="left:1385px;top:78px;width:231px;height:16px;background:#313131"></div>
<div class="a" style="left:1386px;top:78px;width:47px;height:17px;background:#4a4a4a"></div>
<div class="tab" style="left:1393px;top:81px;background:none;font-size:10px;color:#eeeeee">Ebenen</div>
<svg style="left:1576px;top:82px" width="38" height="10"><path d="M0,0.5 L4.5,4.5 L0,8.5 Z M5,0.5 L9.5,4.5 L5,8.5 Z" fill="#c8c8c8"/><path d="M15.5,0 L15.5,10 M17.5,0 L17.5,10" stroke="#555" stroke-width="1"/><path d="M22,3 L26,3 L24,5.5 Z" fill="#d0d0d0"/><path d="M27,1.5 L36,1.5 M27,4 L36,4 M27,6.5 L36,6.5 M27,8.5 L36,8.5" stroke="#d0d0d0" stroke-width="0.9"/></svg>
<div class="a" style="left:1385px;top:94px;width:231px;height:595px;background:#4a4a4a;border-left:1px solid #262626"></div>
<div class="a" style="left:1385px;top:74px;width:1px;height:624px;background:#262626"></div>
<div class="a" style="left:1391px;top:101px;width:220px;height:569px;border:1px solid #333;background:#4a4a4a"></div>
<div class="a" style="left:1392px;top:102px;width:218px;height:20px;background:#5a6374"></div>
<div class="a" style="left:1392px;top:122px;width:218px;height:1px;background:#3c3c3c"></div>
<div class="a" style="left:1392px;top:143px;width:218px;height:1px;background:#3c3c3c"></div>
<div class="a" style="left:1392px;top:164px;width:218px;height:1px;background:#3c3c3c"></div>
<div class="a" style="left:1392px;top:185px;width:218px;height:1px;background:#3c3c3c"></div>
<div class="a" style="left:1412px;top:102px;width:1px;height:83px;background:#3c3c3c"></div>
<div class="a" style="left:1433px;top:102px;width:1px;height:83px;background:#3c3c3c"></div>
<div class="a" style="left:1440px;top:102px;width:1px;height:83px;background:#3c3c3c"></div>
<div class="a" style="left:1575px;top:102px;width:1px;height:83px;background:#3c3c3c"></div>
<div class="a" style="left:1435px;top:103px;width:4px;height:19px;background:#108a3c"></div>
<div class="a" style="left:1435px;top:124px;width:4px;height:19px;background:#108a3c"></div>
<div class="a" style="left:1435px;top:145px;width:4px;height:19px;background:#f0621e"></div>
<div class="a" style="left:1435px;top:166px;width:4px;height:19px;background:#f0621e"></div>
<svg style="left:1392px;top:102px" width="220" height="84">
<g fill="#c4c4c4">
<path d="M3,9.5 Q9,3 15,9.5 Q9,16 3,9.5 Z"/><circle cx="9" cy="9.2" r="2.6" fill="#3a3a3a"/><circle cx="9.8" cy="8.5" r="0.9" fill="#c4c4c4"/>
<path d="M3,30.5 Q9,24 15,30.5 Q9,37 3,30.5 Z"/><circle cx="9" cy="30.2" r="2.6" fill="#3a3a3a"/><circle cx="9.8" cy="29.5" r="0.9" fill="#c4c4c4"/>
<rect x="26" y="51" width="9" height="7" fill="#b8b8b8"/><path d="M28,51 L28,48.5 Q30.5,45.5 33,48.5 L33,51" fill="none" stroke="#b8b8b8" stroke-width="1.4"/>
<rect x="26" y="72" width="9" height="7" fill="#b8b8b8"/><path d="M28,72 L28,69.5 Q30.5,66.5 33,69.5 L33,72" fill="none" stroke="#b8b8b8" stroke-width="1.4"/>
<path d="M52,7 L60,7 L56,12 Z" fill="#e8e8e8"/>
<path d="M53,48 L58,52 L53,56 Z" fill="#e0e0e0"/>
<path d="M53,69 L58,73 L53,77 Z" fill="#e0e0e0"/>
<circle cx="193.5" cy="10" r="4.5" fill="none" stroke="#c8c8c8" stroke-width="1"/>
<circle cx="193.5" cy="31" r="5.5" fill="none" stroke="#c8c8c8" stroke-width="1"/><circle cx="193.5" cy="31" r="3.5" fill="none" stroke="#c8c8c8" stroke-width="1"/>
<circle cx="193.5" cy="52" r="4.5" fill="none" stroke="#c8c8c8" stroke-width="1"/>
<circle cx="193.5" cy="73" r="4.5" fill="none" stroke="#c8c8c8" stroke-width="1"/>
<rect x="204.5" y="7" width="6" height="6" fill="#0e9a44" stroke="#1a1a1a" stroke-width="0.8"/>
<rect x="204.5" y="27.5" width="7" height="7" fill="#0e9a44" stroke="#1a1a1a" stroke-width="0.8"/>
<path d="M212,1 L218,1 L218,6 Z" fill="#e0e0e0"/>
</g>
</svg>
<svg style="left:1461px;top:103px" width="18" height="18"><rect x="0.5" y="0.5" width="17" height="17" fill="#fff" stroke="#111"/><path d="M2,6 L2,12 M16,6 L16,12 M2.5,9 Q5,6 7,9 L9,10 L11,9 Q13,6 15.5,9 M6,9.5 Q7.5,12 9,9.5 Q10.5,12 12,9.5" fill="none" stroke="#8a8a8a" stroke-width="0.9"/></svg>
<svg style="left:1481px;top:124px" width="18" height="18"><rect x="0.5" y="0.5" width="17" height="17" fill="#fff" stroke="#111"/><path d="M2,6 L2,12 M16,6 L16,12 M2.5,9 Q5,6 7,9 L9,10 L11,9 Q13,6 15.5,9 M6,9.5 Q7.5,12 9,9.5 Q10.5,12 12,9.5" fill="none" stroke="#8a8a8a" stroke-width="0.9"/></svg>
<svg style="left:1461px;top:145px" width="18" height="18"><rect x="0.5" y="0.5" width="17" height="17" fill="#fff" stroke="#111"/><rect x="2" y="1" width="1.5" height="16" fill="#f0b060"/><rect x="14.5" y="1" width="1.5" height="16" fill="#f0b060"/><path d="M4,3 L14,3" stroke="#8a3a2a" stroke-width="1.6"/><circle cx="8" cy="8" r="1" fill="#a0a0a0"/><rect x="10" y="8" width="2" height="2" fill="#707070"/><path d="M4,15.5 L14,15.5" stroke="#9a9a9a" stroke-width="0.8"/><rect x="8" y="14" width="2" height="1.5" fill="#555"/></svg>
<svg style="left:1461px;top:166px" width="18" height="18"><rect x="0.5" y="0.5" width="17" height="17" fill="#fff" stroke="#111"/><rect x="2" y="1" width="1.5" height="16" fill="#f0b060"/><rect x="14.5" y="1" width="1.5" height="16" fill="#f0b060"/><circle cx="8" cy="8" r="1" fill="#a0a0a0"/><rect x="10" y="8" width="2" height="2" fill="#707070"/><path d="M4,15.5 L14,15.5" stroke="#9a9a9a" stroke-width="0.8"/><rect x="8" y="14" width="2" height="1.5" fill="#555"/></svg>
<div class="t" style="left:1484px;top:107px;font-size:10px;line-height:10px;color:#eeeeee">Vorderseite</div>
<div class="t" style="left:1505px;top:128px;font-size:10px;line-height:10px;color:#e4e4e4">&lt;Pfad&gt;</div>
<div class="t" style="left:1484px;top:149px;font-size:10px;line-height:10px;color:#e4e4e4">Vorlage Vo...</div>
<div class="t" style="left:1484px;top:170px;font-size:10px;line-height:10px;color:#e4e4e4">Vorlage Rü...</div>
<div class="t" style="left:1391px;top:674px;font-size:10px;line-height:10px;color:#d8e4f0">3 Ebenen</div>
<svg style="left:1470px;top:672px" width="145" height="18">
<g fill="none" stroke="#c8c8c8" stroke-width="1.1">
<circle cx="11" cy="5.5" r="4.5"/><path d="M7.5,9 L3,13.5" stroke-width="1.3"/>
<rect x="28.5" y="2.5" width="7" height="7"/><rect x="31.5" y="5.5" width="7" height="7" fill="#7a7a7a" stroke="#a0a0a0"/>
<path d="M55,2 L57,5 L60,3" /><path d="M58,3 L66,3 L66,12 L60,12 L60,7 Z" fill="#c8c8c8" stroke="none"/>
<path d="M83,3 L93,3 L93,12 L86,12 L83,9 Z" fill="#c8c8c8" stroke="none"/>
<path d="M107,4 L117,4 M108,4 L109,12 L115,12 L116,4 M110,6 L110,11 M112,6 L112,11 M114,6 L114,11 M110,4 L110,2.5 L114,2.5 L114,4" />
</g>
<g fill="#2a2a2a"><rect x="138" y="13" width="1" height="1"/><rect x="140" y="13" width="1" height="1"/><rect x="140" y="11" width="1" height="1"/><rect x="136" y="13" width="1" height="1"/><rect x="138" y="11" width="1" height="1"/><rect x="140" y="9" width="1" height="1"/></g>
</svg>
<div class="a" style="left:1385px;top:689px;width:231px;height:1px;background:#333"></div>
<div class="a" style="left:1385px;top:690px;width:231px;height:8px;background:#404040"></div>
<div class="a" style="left:1490px;top:692px;width:20px;height:4px;background:repeating-linear-gradient(90deg,#1e1e1e 0 1px,#404040 1px 2px)"></div>
<!-- ICON COLUMN -->
<div class="a" style="left:1617px;top:65px;width:303px;height:974px;background:#2b2b2b"></div>
<div class="a" style="left:1617px;top:65px;width:38px;height:11px;background:#2f2f2f"></div>
<svg style="left:1644px;top:67px" width="8" height="7"><path d="M3.5,0 L0,3.5 L3.5,7 Z M8,0 L4.5,3.5 L8,7 Z" fill="#b8b8b8"/></svg>
<div class="a" style="left:1618px;top:77px;width:37px;height:40px;background:#4a4a4a"></div>
<div class="a" style="left:1627px;top:79px;width:20px;height:4px;background:repeating-linear-gradient(90deg,#1e1e1e 0 1px,#4a4a4a 1px 2px)"></div>
<div class="a" style="left:1622px;top:88px;width:29px;height:24px;background:#333333;border-radius:3px;border:1px solid #3a3a3a"></div>
<svg style="left:1628px;top:91px" width="18" height="17"><path d="M9,9 L17,12.5 L9,16 L1,12.5 Z" fill="#bdbdbd"/><path d="M9,1 L17,5.5 L9,10 L1,5.5 Z" fill="#e6e6e6" stroke="#333" stroke-width="1"/></svg>
<div class="a" style="left:1618px;top:118px;width:37px;height:921px;background:#4a4a4a"></div>
<div class="a" style="left:1658px;top:65px;width:262px;height:11px;background:#2f2f2f"></div>
<svg style="left:1907px;top:67px" width="8" height="7"><path d="M0,0 L3.5,3.5 L0,7 Z M4.5,0 L8,3.5 L4.5,7 Z" fill="#b8b8b8"/></svg>
<div class="a" style="left:1658px;top:77px;width:262px;height:17px;background:#313131"></div>
<div class="a" style="left:1658px;top:77px;width:62px;height:17px;background:#4a4a4a"></div>
<svg style="left:1663px;top:80px" width="6" height="11"><path d="M0.5,4 L3,1 L5.5,4 M0.5,7 L3,10 L5.5,7" fill="none" stroke="#d0d0d0" stroke-width="1.1"/></svg>
<div class="tab" style="left:1671px;top:81px;background:none;font-size:10px;color:#eeeeee">Farbhilfe</div>
<svg style="left:1901px;top:82px" width="14" height="8"><path d="M0,1.5 L4,1.5 L2,4 Z" fill="#d0d0d0"/><path d="M5,0.5 L14,0.5 M5,3 L14,3 M5,5.5 L14,5.5 M5,7.5 L14,7.5" stroke="#d0d0d0" stroke-width="0.9"/></svg>
<div class="a" style="left:1658px;top:94px;width:262px;height:153px;background:#4a4a4a"></div>
<div class="a" style="left:1663px;top:102px;width:21px;height:21px;background:#858587;border:2px solid #fff;outline:1px solid #1a1a1a"></div>
<div class="a" style="left:1690px;top:101px;width:208px;height:23px;background:#3a3a3a"></div>
<div class="a" style="left:1691px;top:102px;width:206px;height:21px;background:#e2e2e2"></div>
<div class="a" style="left:1693px;top:104px;width:82px;height:17px;background:#1a1a1a"></div>
<div class="a" style="left:1694px;top:105px;width:16px;height:15px;background:#858587"></div>
<div class="a" style="left:1710px;top:105px;width:16px;height:15px;background:#383a40"></div>
<div class="a" style="left:1726px;top:105px;width:16px;height:15px;background:#3e393c"></div>
<div class="a" style="left:1742px;top:105px;width:16px;height:15px;background:#918473"></div>
<div class="a" style="left:1758px;top:105px;width:16px;height:15px;background:#c6d49e"></div>
<div class="a" style="left:1694px;top:105px;width:16px;height:15px;background:#858587;border:2px solid #fff;outline:1px solid #111"></div>
<div class="a" style="left:1898px;top:101px;width:15px;height:23px;background:#5a5a5a;border:1px solid #3a3a3a"></div>
<svg style="left:1901px;top:109px" width="9" height="6"><path d="M0,0 L8,0 L4,5 Z" fill="#e0e0e0"/></svg>
<div class="t" style="left:1681px;top:133px;font-size:10px;line-height:10px;color:#dfe8f4;font-weight:bold">Schattierungen</div>
<svg style="left:1785px;top:136px" width="7" height="5"><path d="M0,0 L6,0 L3,4 Z" fill="#d0d0d0"/></svg>
<div class="t" style="left:1848px;top:133px;font-size:10px;line-height:10px;color:#dfe8f4;font-weight:bold">Farbtöne</div>
<div class="a" style="left:1663px;top:150px;width:251px;height:76px;background:#2a2a2a"></div>
<div class="a" style="left:1664px;top:151px;width:27px;height:14px;background:#000000"></div>
<div class="a" style="left:1692px;top:151px;width:27px;height:14px;background:#222222"></div>
<div class="a" style="left:1720px;top:151px;width:26px;height:14px;background:#3e3e3e"></div>
<div class="a" style="left:1747px;top:151px;width:27px;height:14px;background:#606060"></div>
<div class="a" style="left:1775px;top:151px;width:27px;height:14px;background:#8a8a8a"></div>
<div class="a" style="left:1803px;top:151px;width:27px;height:14px;background:#a0a0a0"></div>
<div class="a" style="left:1831px;top:151px;width:27px;height:14px;background:#b8b8b8"></div>
<div class="a" style="left:1859px;top:151px;width:26px;height:14px;background:#d0d0d0"></div>
<div class="a" style="left:1886px;top:151px;width:27px;height:14px;background:#e8e8e8"></div>
<div class="a" style="left:1664px;top:166px;width:27px;height:14px;background:#19191c"></div>
<div class="a" style="left:1692px;top:166px;width:27px;height:14px;background:#333336"></div>
<div class="a" style="left:1720px;top:166px;width:26px;height:14px;background:#3d3c3f"></div>
<div class="a" style="left:1747px;top:166px;width:27px;height:14px;background:#3b3a40"></div>
<div class="a" style="left:1775px;top:166px;width:27px;height:14px;background:#35373d"></div>
<div class="a" style="left:1803px;top:166px;width:27px;height:14px;background:#4f4d53"></div>
<div class="a" style="left:1831px;top:166px;width:27px;height:14px;background:#7a7478"></div>
<div class="a" style="left:1859px;top:166px;width:26px;height:14px;background:#a59fa3"></div>
<div class="a" style="left:1886px;top:166px;width:27px;height:14px;background:#d4d0d3"></div>
<div class="a" style="left:1664px;top:181px;width:27px;height:14px;background:#19181b"></div>
<div class="a" style="left:1692px;top:181px;width:27px;height:14px;background:#353134"></div>
<div class="a" style="left:1720px;top:181px;width:26px;height:14px;background:#433c3e"></div>
<div class="a" style="left:1747px;top:181px;width:27px;height:14px;background:#483a3e"></div>
<div class="a" style="left:1775px;top:181px;width:27px;height:14px;background:#3f3537"></div>
<div class="a" style="left:1803px;top:181px;width:27px;height:14px;background:#5c5053"></div>
<div class="a" style="left:1831px;top:181px;width:27px;height:14px;background:#7e7072"></div>
<div class="a" style="left:1859px;top:181px;width:26px;height:14px;background:#a89c9c"></div>
<div class="a" style="left:1886px;top:181px;width:27px;height:14px;background:#d6cfce"></div>
<div class="a" style="left:1664px;top:196px;width:27px;height:14px;background:#1a181c"></div>
<div class="a" style="left:1692px;top:196px;width:27px;height:14px;background:#575455"></div>
<div class="a" style="left:1720px;top:196px;width:26px;height:14px;background:#7a746e"></div>
<div class="a" style="left:1747px;top:196px;width:27px;height:14px;background:#928270"></div>
<div class="a" style="left:1775px;top:196px;width:27px;height:14px;background:#9a8672"></div>
<div class="a" style="left:1803px;top:196px;width:27px;height:14px;background:#ae9c8a"></div>
<div class="a" style="left:1831px;top:196px;width:27px;height:14px;background:#c6b6a6"></div>
<div class="a" style="left:1859px;top:196px;width:26px;height:14px;background:#ddd0c6"></div>
<div class="a" style="left:1886px;top:196px;width:27px;height:14px;background:#f0ebe6"></div>
<div class="a" style="left:1664px;top:211px;width:27px;height:14px;background:#1a181c"></div>
<div class="a" style="left:1692px;top:211px;width:27px;height:14px;background:#606460"></div>
<div class="a" style="left:1720px;top:211px;width:26px;height:14px;background:#8b9589"></div>
<div class="a" style="left:1747px;top:211px;width:27px;height:14px;background:#a9b59a"></div>
<div class="a" style="left:1775px;top:211px;width:27px;height:14px;background:#c5d5a5"></div>
<div class="a" style="left:1803px;top:211px;width:27px;height:14px;background:#d5e1bd"></div>
<div class="a" style="left:1831px;top:211px;width:27px;height:14px;background:#e1e9d1"></div>
<div class="a" style="left:1859px;top:211px;width:26px;height:14px;background:#eef2e4"></div>
<div class="a" style="left:1886px;top:211px;width:27px;height:14px;background:#f8f9f2"></div>
<svg style="left:1669px;top:232px" width="20" height="12"><rect x="0.5" y="0.5" width="13" height="9" fill="#888" stroke="#d0d0d0"/><path d="M5,0.5 L5,9.5 M9.5,0.5 L9.5,9.5 M0.5,5 L13.5,5" stroke="#d0d0d0"/><path d="M14,8 L19,8 L16.5,11 Z" fill="#d0d0d0"/></svg>
<div class="t" style="left:1695px;top:232px;font-size:10px;line-height:10px;color:#dfe8f4;">Ohne</div>
<svg style="left:1853px;top:231px" width="40" height="13"><circle cx="6" cy="6" r="5.5" fill="#5a5a5a" stroke="#b0b0b0"/><circle cx="6" cy="6" r="2" fill="#c0c0c0"/><rect x="26.5" y="1.5" width="11" height="9" fill="#a8a8a8" stroke="#d0d0d0"/><path d="M30,2 L30,10 M33,2 L33,10" stroke="#555"/><path d="M21,7 L27,7 M24,4 L24,10" stroke="#e0e0e0" stroke-width="2"/></svg>
<svg style="left:1906px;top:238px" width="8" height="8"><g fill="#222"><rect x="6" y="0" width="1" height="1"/><rect x="4" y="2" width="1" height="1"/><rect x="6" y="2" width="1" height="1"/><rect x="2" y="4" width="1" height="1"/><rect x="4" y="4" width="1" height="1"/><rect x="6" y="4" width="1" height="1"/><rect x="0" y="6" width="1" height="1"/><rect x="2" y="6" width="1" height="1"/><rect x="4" y="6" width="1" height="1"/><rect x="6" y="6" width="1" height="1"/></g></svg>
<div class="a" style="left:1658px;top:247px;width:262px;height:3px;background:#2b2b2b"></div>
<div class="a" style="left:1658px;top:250px;width:262px;height:17px;background:#313131"></div>
<div class="a" style="left:1658px;top:250px;width:55px;height:17px;background:#4a4a4a"></div>
<svg style="left:1663px;top:253px" width="6" height="11"><path d="M0.5,4 L3,1 L5.5,4 M0.5,7 L3,10 L5.5,7" fill="none" stroke="#d0d0d0" stroke-width="1.1"/></svg>
<div class="tab" style="left:1671px;top:254px;background:none;font-size:10px;color:#eeeeee">Verlauf</div>
<svg style="left:1901px;top:255px" width="14" height="8"><path d="M0,1.5 L4,1.5 L2,4 Z" fill="#d0d0d0"/><path d="M5,0.5 L14,0.5 M5,3 L14,3 M5,5.5 L14,5.5 M5,7.5 L14,7.5" stroke="#d0d0d0" stroke-width="0.9"/></svg>
<div class="a" style="left:1658px;top:267px;width:262px;height:215px;background:#4a4a4a"></div>
<div class="a" style="left:1664px;top:274px;width:30px;height:30px;background:linear-gradient(90deg,#fff,#9a9a9a 50%,#111);border:1px solid #1e1e1e"></div>
<svg style="left:1697px;top:286px" width="7" height="5"><path d="M0,0 L6,0 L3,4 Z" fill="#e0e0e0"/></svg>
<div class="a" style="left:1675px;top:321px;width:19px;height:19px;background:#fff;border:1px solid #222"></div>
<div class="a" style="left:1679px;top:325px;width:11px;height:11px;background:#333;border:1px solid #fff"></div>
<svg style="left:1675px;top:321px" width="19" height="19"><path d="M1,18 L18,1" stroke="#e0202a" stroke-width="2"/></svg>
<div class="a" style="left:1665px;top:311px;width:19px;height:19px;background:#858587;border:2px solid #f4f4f4;outline:1px solid #222"></div>
<svg style="left:1671px;top:350px" width="17" height="15"><rect x="1.5" y="0.5" width="9" height="6" fill="#5e5e5e" stroke="#6e6e6e"/><rect x="4.5" y="8.5" width="9" height="6" fill="#5e5e5e" stroke="#6e6e6e"/><path d="M11,3 L15,3 L13,5 Z M0,11 L4,11 L2,9 Z" fill="#6e6e6e"/></svg>
<div class="t" style="left:1731px;top:279px;font-size:10px;line-height:10px;color:#e0e0e0;">Art:</div>
<div class="a" style="left:1752px;top:274px;width:160px;height:19px;background:#606060;border:1px solid #3a3a3a"></div>
<div class="a" style="left:1893px;top:277px;width:1px;height:13px;background:#4a4a4a"></div>
<svg style="left:1899px;top:280px" width="9" height="6"><path d="M0,0 L8,0 L4,5 Z" fill="#e0e0e0"/></svg>
<div class="t" style="left:1713px;top:305px;font-size:10px;line-height:10px;color:#8c8c8c;">Kontur:</div>
<div class="a" style="left:1752px;top:300px;width:70px;height:20px;background:#474747;border:1px solid #3c3c3c"></div>
<svg style="left:1753px;top:301px" width="68" height="18"><g fill="none" stroke="#6a6a6a"><rect x="0.5" y="0.5" width="22" height="17"/><rect x="23.5" y="0.5" width="22" height="17"/><rect x="46.5" y="0.5" width="21" height="17"/><path d="M5,15 L5,5 L17,5 M8,15 L8,8 L17,8" /><path d="M28,15 L28,5 L40,5 M31,15 L31,8 L40,8"/><path d="M51,15 L51,5 L63,5 M54,15 L54,8 L63,8"/></g></svg>
<svg style="left:1733px;top:331px" width="13" height="11"><path d="M0.5,10.5 L12.5,10.5 L9,0.5 Z" fill="none" stroke="#6a6a6a"/></svg>
<div class="a" style="left:1752px;top:327px;width:68px;height:19px;background:#6a6a6a;border:1px solid #3c3c3c"></div>
<div class="a" style="left:1803px;top:328px;width:16px;height:17px;background:#606060;border-left:1px solid #4a4a4a"></div>
<svg style="left:1807px;top:334px" width="9" height="6"><path d="M0,0 L8,0 L4,5 Z" fill="#8a8a8a"/></svg>
<svg style="left:1731px;top:354px" width="16" height="15"><path d="M2.5,0 L2.5,14 M0.5,2 L2.5,0 L4.5,2 M0.5,12 L2.5,14 L4.5,12" fill="none" stroke="#6a6a6a"/><ellipse cx="10.5" cy="6.5" rx="4.5" ry="3.5" fill="none" stroke="#6a6a6a"/><path d="M5,13.5 L15,13.5" stroke="#6a6a6a"/></svg>
<div class="a" style="left:1752px;top:353px;width:68px;height:19px;background:#6a6a6a;border:1px solid #3c3c3c"></div>
<div class="a" style="left:1803px;top:354px;width:16px;height:17px;background:#606060;border-left:1px solid #4a4a4a"></div>
<svg style="left:1807px;top:360px" width="9" height="6"><path d="M0,0 L8,0 L4,5 Z" fill="#8a8a8a"/></svg>
<div class="a" style="left:1669px;top:386px;width:215px;height:19px;background:linear-gradient(90deg,#ffffff,#9a9a9e 50%,#000000);border:1px solid #2a2a2a"></div>
<svg style="left:1896px;top:389px" width="12" height="14"><path d="M0.5,2.5 L11.5,2.5 M1.5,3 L2.5,13 L9.5,13 L10.5,3 M4,5 L4,12 M6,5 L6,12 M8,5 L8,12 M4,2.5 L4,0.5 L8,0.5 L8,2.5" fill="none" stroke="#6a6a6a"/></svg>
<div class="t" style="left:1702px;top:437px;font-size:10px;line-height:10px;color:#8c8c8c;">Deckkraft:</div>
<div class="a" style="left:1752px;top:432px;width:68px;height:19px;background:#6a6a6a;border:1px solid #3c3c3c"></div>
<div class="a" style="left:1803px;top:433px;width:16px;height:17px;background:#606060;border-left:1px solid #4a4a4a"></div>
<svg style="left:1807px;top:439px" width="9" height="6"><path d="M0,0 L8,0 L4,5 Z" fill="#8a8a8a"/></svg>
<div class="t" style="left:1709px;top:463px;font-size:10px;line-height:10px;color:#8c8c8c;">Position:</div>
<div class="a" style="left:1752px;top:458px;width:68px;height:19px;background:#6a6a6a;border:1px solid #3c3c3c"></div>
<div class="a" style="left:1803px;top:459px;width:16px;height:17px;background:#606060;border-left:1px solid #4a4a4a"></div>
<svg style="left:1807px;top:465px" width="9" height="6"><path d="M0,0 L8,0 L4,5 Z" fill="#8a8a8a"/></svg>
<svg style="left:1906px;top:473px" width="8" height="8"><g fill="#222"><rect x="6" y="0" width="1" height="1"/><rect x="4" y="2" width="1" height="1"/><rect x="6" y="2" width="1" height="1"/><rect x="2" y="4" width="1" height="1"/><rect x="4" y="4" width="1" height="1"/><rect x="6" y="4" width="1" height="1"/><rect x="0" y="6" width="1" height="1"/><rect x="2" y="6" width="1" height="1"/><rect x="4" y="6" width="1" height="1"/><rect x="6" y="6" width="1" height="1"/></g></svg>
<div class="a" style="left:1658px;top:482px;width:262px;height:4px;background:#2b2b2b"></div>
<div class="a" style="left:1658px;top:486px;width:262px;height:17px;background:#313131"></div>
<div class="a" style="left:1658px;top:486px;width:62px;height:17px;background:#4a4a4a"></div>
<div class="tab" style="left:1666px;top:490px;background:none;font-size:10px;color:#eeeeee">Farbfelder</div>
<svg style="left:1901px;top:491px" width="14" height="8"><path d="M0,1.5 L4,1.5 L2,4 Z" fill="#d0d0d0"/><path d="M5,0.5 L14,0.5 M5,3 L14,3 M5,5.5 L14,5.5 M5,7.5 L14,7.5" stroke="#d0d0d0" stroke-width="0.9"/></svg>
<div class="a" style="left:1658px;top:503px;width:262px;height:153px;background:#4a4a4a"></div>
<div class="a" style="left:1674px;top:520px;width:18px;height:18px;background:#fff;border:1px solid #222"></div>
<div class="a" style="left:1678px;top:524px;width:10px;height:10px;background:#333;border:1px solid #fff"></div>
<svg style="left:1674px;top:520px" width="18" height="18"><path d="M1,17 L17,1" stroke="#e0202a" stroke-width="2"/></svg>
<div class="a" style="left:1664px;top:510px;width:18px;height:18px;background:#858587;border:2px solid #f4f4f4;outline:1px solid #222"></div>
<div class="a" style="left:1862px;top:510px;width:52px;height:22px;background:#333;border:1px solid #3a3a3a"></div>
<div class="a" style="left:1863px;top:511px;width:24px;height:20px;background:#5a5a5a"></div>
<svg style="left:1867px;top:513px" width="44" height="16"><g fill="#e0e0e0"><rect x="3" y="2" width="13" height="2"/><rect x="3" y="5.5" width="13" height="2"/><rect x="3" y="9" width="13" height="2"/><rect x="3" y="12.5" width="13" height="2"/><rect x="28" y="2" width="3.5" height="3.5"/><rect x="28" y="7" width="3.5" height="3.5"/><rect x="28" y="12" width="3.5" height="3.5"/><rect x="33" y="2" width="3.5" height="3.5"/><rect x="33" y="7" width="3.5" height="3.5"/><rect x="33" y="12" width="3.5" height="3.5"/><rect x="38" y="2" width="3.5" height="3.5"/><rect x="38" y="7" width="3.5" height="3.5"/><rect x="38" y="12" width="3.5" height="3.5"/></g></svg>
<div class="a" style="left:1663px;top:544px;width:251px;height:93px;background:#464646;border:1px solid #363636"></div>
<div class="a" style="left:1900px;top:545px;width:13px;height:91px;background:#404040"></div>
<svg style="left:1902px;top:550px" width="9" height="84"><path d="M0,6 L8,6 L4,1 Z M0,76 L8,76 L4,81 Z" fill="#6a6a6a"/></svg>
<div class="a" style="left:1664px;top:545px;width:13px;height:13px;background:#ffffff"></div>
<svg style="left:1664px;top:545px" width="13" height="13"><path d="M0,13 L13,0" stroke="#e0202a" stroke-width="2"/></svg>
<div class="a" style="left:1678px;top:545px;width:13px;height:13px;background:#ffffff"></div>
<svg style="left:1678px;top:545px" width="13" height="13"><circle cx="6.5" cy="6.5" r="4" fill="none" stroke="#222"/><path d="M6.5,0 L6.5,13 M0,6.5 L13,6.5" stroke="#222"/></svg>
<div class="a" style="left:1692px;top:545px;width:13px;height:13px;background:#ffffff"></div>
<div class="a" style="left:1706px;top:545px;width:13px;height:13px;background:#000000"></div>
<div class="a" style="left:1720px;top:545px;width:13px;height:13px;background:#e2001a"></div>
<div class="a" style="left:1734px;top:545px;width:13px;height:13px;background:#ffed00"></div>
<div class="a" style="left:1748px;top:545px;width:13px;height:13px;background:#009640"></div>
<div class="a" style="left:1762px;top:545px;width:13px;height:13px;background:#009fe3"></div>
<div class="a" style="left:1776px;top:545px;width:13px;height:13px;background:#312783"></div>
<div class="a" style="left:1790px;top:545px;width:13px;height:13px;background:#e5007d"></div>
<div class="a" style="left:1804px;top:545px;width:13px;height:13px;background:#be1622"></div>
<div class="a" style="left:1818px;top:545px;width:13px;height:13px;background:#e53a30"></div>
<div class="a" style="left:1832px;top:545px;width:13px;height:13px;background:#e95b25"></div>
<div class="a" style="left:1846px;top:545px;width:13px;height:13px;background:#f39200"></div>
<div class="a" style="left:1860px;top:545px;width:13px;height:13px;background:#f7b32b"></div>
<div class="a" style="left:1874px;top:545px;width:13px;height:13px;background:#f9e300"></div>
<div class="a" style="left:1664px;top:559px;width:13px;height:13px;background:#dede00"></div>
<div class="a" style="left:1678px;top:559px;width:13px;height:13px;background:#a3c617"></div>
<div class="a" style="left:1692px;top:559px;width:13px;height:13px;background:#58a531"></div>
<div class="a" style="left:1706px;top:559px;width:13px;height:13px;background:#2d8c3c"></div>
<div class="a" style="left:1720px;top:559px;width:13px;height:13px;background:#1f6b35"></div>
<div class="a" style="left:1734px;top:559px;width:13px;height:13px;background:#5aae60"></div>
<div class="a" style="left:1748px;top:559px;width:13px;height:13px;background:#30a19b"></div>
<div class="a" style="left:1762px;top:559px;width:13px;height:13px;background:#5aace0"></div>
<div class="a" style="left:1776px;top:559px;width:13px;height:13px;background:#3474bb"></div>
<div class="a" style="left:1790px;top:559px;width:13px;height:13px;background:#243688"></div>
<div class="a" style="left:1804px;top:559px;width:13px;height:13px;background:#27286d"></div>
<div class="a" style="left:1818px;top:559px;width:13px;height:13px;background:#662482"></div>
<div class="a" style="left:1832px;top:559px;width:13px;height:13px;background:#951b81"></div>
<div class="a" style="left:1846px;top:559px;width:13px;height:13px;background:#a2135c"></div>
<div class="a" style="left:1860px;top:559px;width:13px;height:13px;background:#c70b5a"></div>
<div class="a" style="left:1874px;top:559px;width:13px;height:13px;background:#d81a80"></div>
<div class="a" style="left:1664px;top:573px;width:13px;height:13px;background:#cfc2a0"></div>
<div class="a" style="left:1678px;top:573px;width:13px;height:13px;background:#a69282"></div>
<div class="a" style="left:1692px;top:573px;width:13px;height:13px;background:#83705e"></div>
<div class="a" style="left:1706px;top:573px;width:13px;height:13px;background:#614e40"></div>
<div class="a" style="left:1720px;top:573px;width:13px;height:13px;background:#c7a46a"></div>
<div class="a" style="left:1734px;top:573px;width:13px;height:13px;background:#b08448"></div>
<div class="a" style="left:1748px;top:573px;width:13px;height:13px;background:#91633b"></div>
<div class="a" style="left:1762px;top:573px;width:13px;height:13px;background:#7f4f26"></div>
<div class="a" style="left:1776px;top:573px;width:13px;height:13px;background:#6b3f1c"></div>
<div class="a" style="left:1790px;top:573px;width:13px;height:13px;background:#4a2d1d"></div>
<div class="a" style="left:1804px;top:573px;width:13px;height:13px;background:linear-gradient(90deg,#fff,#000)"></div>
<div class="a" style="left:1818px;top:573px;width:13px;height:13px;background:#000000"></div>
<div class="a" style="left:1832px;top:573px;width:13px;height:13px;background:radial-gradient(circle,#fff 0,#888 45%,#000 75%)"></div>
<div class="a" style="left:1846px;top:573px;width:13px;height:13px;background:#000000"></div>
<div class="a" style="left:1860px;top:573px;width:13px;height:13px;background:linear-gradient(90deg,#c07a30,#f8e0b0 50%,#8a4a8a)"></div>
<div class="a" style="left:1874px;top:573px;width:13px;height:13px;background:radial-gradient(circle,#fff0c0 0,#b06a30 45%,#4a2010 80%)"></div>
<div class="a" style="left:1664px;top:587px;width:13px;height:13px;background:repeating-linear-gradient(45deg,#e03020 0 2px,#f08020 2px 4px,#5050a0 4px 5px)"></div>
<div class="a" style="left:1678px;top:587px;width:13px;height:13px;background:#f08a00"></div>
<svg style="left:1678px;top:587px" width="13" height="13"><path d="M13,5 L13,13 L5,13 Z" fill="#fff"/><circle cx="10" cy="10" r="1.3" fill="#000"/></svg>
<div class="a" style="left:1692px;top:587px;width:13px;height:13px;background:#b0b4a8"></div>
<svg style="left:1692px;top:587px" width="13" height="13"><path d="M13,5 L13,13 L5,13 Z" fill="#fff"/><circle cx="10" cy="10" r="1.3" fill="#000"/></svg>
<div class="a" style="left:1706px;top:587px;width:13px;height:13px;background:#303530"></div>
<svg style="left:1706px;top:587px" width="13" height="13"><path d="M13,5 L13,13 L5,13 Z" fill="#fff"/><circle cx="10" cy="10" r="1.3" fill="#000"/></svg>
<div class="a" style="left:1720px;top:587px;width:13px;height:13px;background:#b0b4a8"></div>
<svg style="left:1720px;top:587px" width="13" height="13"><path d="M13,5 L13,13 L5,13 Z" fill="#fff"/><circle cx="10" cy="10" r="1.3" fill="#000"/></svg>
<div class="a" style="left:1734px;top:587px;width:13px;height:13px;background:#000000"></div>
<div class="a" style="left:1748px;top:587px;width:13px;height:13px;background:#333333"></div>
<div class="a" style="left:1762px;top:587px;width:13px;height:13px;background:#555555"></div>
<div class="a" style="left:1776px;top:587px;width:13px;height:13px;background:#6e6e6e"></div>
<div class="a" style="left:1790px;top:587px;width:13px;height:13px;background:#888888"></div>
<div class="a" style="left:1790px;top:587px;width:13px;height:13px;border:2px solid #111;outline:1px solid #fff;outline-offset:-3px;background:#888"></div>
<div class="a" style="left:1804px;top:587px;width:13px;height:13px;background:#9a9a9a"></div>
<div class="a" style="left:1818px;top:587px;width:13px;height:13px;background:#acacac"></div>
<div class="a" style="left:1832px;top:587px;width:13px;height:13px;background:#c0c0c0"></div>
<div class="a" style="left:1846px;top:587px;width:13px;height:13px;background:#d6d6d6"></div>
<div class="a" style="left:1860px;top:587px;width:13px;height:13px;background:#e8e8e8"></div>
<div class="a" style="left:1874px;top:587px;width:13px;height:13px;background:#f4f4f4"></div>
<div class="a" style="left:1664px;top:601px;width:13px;height:13px;background:#e2001a"></div>
<div class="a" style="left:1678px;top:601px;width:13px;height:13px;background:#e95b25"></div>
<div class="a" style="left:1692px;top:601px;width:13px;height:13px;background:#ffdc00"></div>
<div class="a" style="left:1706px;top:601px;width:13px;height:13px;background:#3c9a3c"></div>
<div class="a" style="left:1720px;top:601px;width:13px;height:13px;background:#1c3b8f"></div>
<div class="a" style="left:1734px;top:601px;width:13px;height:13px;background:#6c3a8e"></div>
<svg style="left:1668px;top:640px" width="250" height="14"><g fill="none" stroke="#b8b8b8" stroke-width="1.1"><path d="M1,1 L1,11 M3.5,1 L3.5,11 M6,1 L9,11"/><path d="M10,9 L14,9 L12,11.5 Z" fill="#b8b8b8" stroke="none"/><circle cx="34" cy="6" r="3"/><path d="M36,3 L39,1 M36,9 L39,11" /><circle cx="31" cy="6" r="1" fill="#b8b8b8"/><rect x="108.5" y="1.5" width="11" height="9"/><path d="M108.5,5.5 L119.5,5.5 M112,1.5 L112,10.5 M116,1.5 L116,10.5"/><path d="M117,9 L121,9 L119,11.5 Z" fill="#b8b8b8" stroke="none"/><rect x="134.5" y="1.5" width="11" height="10"/><path d="M137,4.5 L143,4.5 M137,7 L143,7 M137,9.5 L143,9.5"/><path d="M160,3 L164,3 L165,4.5 L172,4.5 L172,12 L160,12 Z" fill="#b8b8b8" stroke="none"/><path d="M186,2 L197,2 L197,12 L189,12 L186,9 Z" fill="#b8b8b8" stroke="none"/><path d="M211,3.5 L223,3.5 M212.5,4 L213.5,12.5 L220.5,12.5 L221.5,4 M215,6 L215,11 M217,6 L217,11 M219,6 L219,11 M215,3.5 L215,1.5 L219,1.5 L219,3.5"/></g></svg>
<svg style="left:1906px;top:646px" width="8" height="8"><g fill="#222"><rect x="6" y="0" width="1" height="1"/><rect x="4" y="2" width="1" height="1"/><rect x="6" y="2" width="1" height="1"/><rect x="2" y="4" width="1" height="1"/><rect x="4" y="4" width="1" height="1"/><rect x="6" y="4" width="1" height="1"/><rect x="0" y="6" width="1" height="1"/><rect x="2" y="6" width="1" height="1"/><rect x="4" y="6" width="1" height="1"/><rect x="6" y="6" width="1" height="1"/></g></svg>
<div class="a" style="left:1658px;top:656px;width:262px;height:3px;background:#2b2b2b"></div>
<div class="a" style="left:1658px;top:659px;width:262px;height:17px;background:#313131"></div>
<div class="a" style="left:1658px;top:659px;width:46px;height:17px;background:#4a4a4a"></div>
<svg style="left:1663px;top:662px" width="6" height="11"><path d="M0.5,4 L3,1 L5.5,4 M0.5,7 L3,10 L5.5,7" fill="none" stroke="#d0d0d0" stroke-width="1.1"/></svg>
<div class="tab" style="left:1671px;top:663px;background:none;font-size:10px;color:#eeeeee">Farbe</div>
<svg style="left:1901px;top:664px" width="14" height="8"><path d="M0,1.5 L4,1.5 L2,4 Z" fill="#d0d0d0"/><path d="M5,0.5 L14,0.5 M5,3 L14,3 M5,5.5 L14,5.5 M5,7.5 L14,7.5" stroke="#d0d0d0" stroke-width="0.9"/></svg>
<div class="a" style="left:1658px;top:676px;width:262px;height:167px;background:#4a4a4a"></div>
<svg style="left:1663px;top:683px" width="32" height="14"><rect x="0.5" y="0.5" width="8" height="8" fill="#d0d0d0" stroke="#222"/><rect x="4.5" y="4.5" width="8" height="8" fill="#222" stroke="#d0d0d0"/><rect x="2" y="2" width="5" height="5" fill="#fff"/><path d="M22,4 L27,4 Q29,4 29,6 L29,10 M20,4 L23,1.5 M20,4 L23,6.5 M29,11 L26.5,8 M29,11 L31.5,8" fill="none" stroke="#c8c8c8" stroke-width="1.1"/></svg>
<div class="a" style="left:1674px;top:711px;width:18px;height:18px;background:#fff;border:1px solid #222"></div>
<div class="a" style="left:1678px;top:715px;width:10px;height:10px;background:#333;border:1px solid #fff"></div>
<svg style="left:1674px;top:711px" width="18" height="18"><path d="M1,17 L17,1" stroke="#e0202a" stroke-width="2"/></svg>
<div class="a" style="left:1664px;top:701px;width:18px;height:18px;background:#858587;border:2px solid #f4f4f4;outline:1px solid #222"></div>
<svg style="left:1669px;top:744px" width="13" height="14"><path d="M6.5,1 L12,4 L12,10 L6.5,13 L1,10 L1,4 Z M1,4 L6.5,7 L12,4 M6.5,7 L6.5,13" fill="none" stroke="#8a8a8a"/></svg>
<div class="a" style="left:1687px;top:744px;width:14px;height:14px;background:#8a8a8a;border:1px solid #e8e8e8;outline:1px solid #333"></div>
<div class="t" style="left:1710px;top:690px;font-size:10px;line-height:10px;color:#d8e4f0;font-weight:normal">C</div>
<div class="a" style="left:1728px;top:692px;width:103px;height:5px;background:linear-gradient(90deg,#6a6a6a,#0a6a96);box-shadow:0 1px 0 #333"></div>
<svg style="left:1724px;top:698px" width="9" height="7"><path d="M0.5,6.5 L4.5,0.5 L8.5,6.5 Z" fill="#c8c8c8" stroke="#333" stroke-width="0.6"/></svg>
<div class="a" style="left:1837px;top:685px;width:34px;height:19px;background:#a8a8a8;border:1px solid #3a3a3a"></div>
<div class="t" style="left:1841px;top:690px;font-size:10px;line-height:10px;color:#111;">0</div>
<div class="t" style="left:1873px;top:690px;font-size:10px;line-height:10px;color:#e0e0e0;">%</div>
<div class="t" style="left:1710px;top:715px;font-size:10px;line-height:10px;color:#d8e4f0;font-weight:normal">M</div>
<div class="a" style="left:1728px;top:717px;width:103px;height:5px;background:linear-gradient(90deg,#6a6a6a,#a01858);box-shadow:0 1px 0 #333"></div>
<svg style="left:1724px;top:723px" width="9" height="7"><path d="M0.5,6.5 L4.5,0.5 L8.5,6.5 Z" fill="#c8c8c8" stroke="#333" stroke-width="0.6"/></svg>
<div class="a" style="left:1837px;top:710px;width:34px;height:19px;background:#a8a8a8;border:1px solid #3a3a3a"></div>
<div class="t" style="left:1841px;top:715px;font-size:10px;line-height:10px;color:#111;">0</div>
<div class="t" style="left:1873px;top:715px;font-size:10px;line-height:10px;color:#e0e0e0;">%</div>
<div class="t" style="left:1710px;top:740px;font-size:10px;line-height:10px;color:#d8e4f0;font-weight:normal">Y</div>
<div class="a" style="left:1728px;top:742px;width:103px;height:5px;background:linear-gradient(90deg,#6a6a6a,#b8a010);box-shadow:0 1px 0 #333"></div>
<svg style="left:1724px;top:748px" width="9" height="7"><path d="M0.5,6.5 L4.5,0.5 L8.5,6.5 Z" fill="#c8c8c8" stroke="#333" stroke-width="0.6"/></svg>
<div class="a" style="left:1837px;top:735px;width:34px;height:19px;background:#a8a8a8;border:1px solid #3a3a3a"></div>
<div class="t" style="left:1841px;top:740px;font-size:10px;line-height:10px;color:#111;">0</div>
<div class="t" style="left:1873px;top:740px;font-size:10px;line-height:10px;color:#e0e0e0;">%</div>
<div class="t" style="left:1710px;top:765px;font-size:10px;line-height:10px;color:#d8e4f0;font-weight:normal">K</div>
<div class="a" style="left:1728px;top:767px;width:103px;height:5px;background:linear-gradient(90deg,#ffffff,#1a1a1a);box-shadow:0 1px 0 #333"></div>
<svg style="left:1785px;top:773px" width="9" height="7"><path d="M0.5,6.5 L4.5,0.5 L8.5,6.5 Z" fill="#c8c8c8" stroke="#333" stroke-width="0.6"/></svg>
<div class="a" style="left:1837px;top:760px;width:34px;height:19px;background:#a8a8a8;border:1px solid #3a3a3a"></div>
<div class="t" style="left:1841px;top:765px;font-size:10px;line-height:10px;color:#111;">60</div>
<div class="t" style="left:1873px;top:765px;font-size:10px;line-height:10px;color:#e0e0e0;">%</div>
<div class="a" style="left:1663px;top:790px;width:40px;height:14px;background:#fff;border:1px solid #333"></div>
<div class="a" style="left:1677px;top:791px;width:13px;height:12px;background:#000"></div>
<svg style="left:1664px;top:791px" width="13" height="12"><path d="M0,12 L13,0" stroke="#e0202a" stroke-width="2"/></svg>
<div class="a" style="left:1664px;top:814px;width:238px;height:23px;border:1px solid #2a2a2a;background:linear-gradient(90deg,#d0103a 0%,#f0d020 14%,#50b020 32%,#30b0e0 50%,#3040a0 66%,#b030a0 84%,#e01050 100%)"></div>
<div class="a" style="left:1665px;top:815px;width:236px;height:21px;background:linear-gradient(180deg,rgba(255,255,255,0.95) 0%,rgba(255,255,255,0) 50%,rgba(0,0,0,0) 55%,rgba(0,0,0,0.9) 100%)"></div>
<svg style="left:1906px;top:833px" width="8" height="8"><g fill="#222"><rect x="6" y="0" width="1" height="1"/><rect x="4" y="2" width="1" height="1"/><rect x="6" y="2" width="1" height="1"/><rect x="2" y="4" width="1" height="1"/><rect x="4" y="4" width="1" height="1"/><rect x="6" y="4" width="1" height="1"/><rect x="0" y="6" width="1" height="1"/><rect x="2" y="6" width="1" height="1"/><rect x="4" y="6" width="1" height="1"/><rect x="6" y="6" width="1" height="1"/></g></svg>
<div class="a" style="left:1658px;top:843px;width:262px;height:3px;background:#2b2b2b"></div>
<div class="a" style="left:1658px;top:846px;width:262px;height:17px;background:#313131"></div>
<div class="a" style="left:1658px;top:846px;width:57px;height:17px;background:#4a4a4a"></div>
<div class="tab" style="left:1666px;top:850px;background:none;font-size:10px;color:#eeeeee">Aussehen</div>
<svg style="left:1901px;top:851px" width="14" height="8"><path d="M0,1.5 L4,1.5 L2,4 Z" fill="#d0d0d0"/><path d="M5,0.5 L14,0.5 M5,3 L14,3 M5,5.5 L14,5.5 M5,7.5 L14,7.5" stroke="#d0d0d0" stroke-width="0.9"/></svg>
<div class="a" style="left:1658px;top:863px;width:262px;height:154px;background:#4a4a4a"></div>
<div class="a" style="left:1663px;top:869px;width:251px;height:130px;border:1px solid #383838;background:#4a4a4a"></div>
<div class="a" style="left:1664px;top:894px;width:249px;height:1px;background:#3a3a3a"></div>
<div class="a" style="left:1664px;top:919px;width:249px;height:1px;background:#3a3a3a"></div>
<div class="a" style="left:1664px;top:944px;width:249px;height:1px;background:#3a3a3a"></div>
<div class="a" style="left:1664px;top:969px;width:249px;height:1px;background:#3a3a3a"></div>
<div class="a" style="left:1688px;top:895px;width:1px;height:74px;background:#3a3a3a"></div>
<div class="a" style="left:1667px;top:873px;width:19px;height:19px;background:#858587;border:2px solid #fafafa;outline:1px solid #222"></div>
<div class="t" style="left:1711px;top:877px;font-size:11px;line-height:11px;color:#eeeeee;font-weight:bold">Pfad</div>
<svg style="left:1669px;top:900px" width="40" height="70"><g fill="#c4c4c4"><path d="M1,7 Q7,1 13,7 Q7,13 1,7 Z"/><circle cx="7" cy="6.8" r="2.4" fill="#3a3a3a"/><path d="M1,32 Q7,26 13,32 Q7,38 1,32 Z"/><circle cx="7" cy="31.8" r="2.4" fill="#3a3a3a"/><path d="M1,57 Q7,51 13,57 Q7,63 1,57 Z" fill="#5a5a5a"/><circle cx="7" cy="56.8" r="2.4" fill="#4a4a4a"/><path d="M25,4 L31,7.5 L25,11 Z" fill="#e0e0e0"/><path d="M25,29 L31,32.5 L25,36 Z" fill="#e0e0e0"/></g></svg>
<div class="t" style="left:1711px;top:902px;font-size:10px;line-height:10px;color:#e8913a;">Kontur:</div>
<div class="a" style="left:1711px;top:913px;width:33px;height:0;border-bottom:1px dotted #e8913a"></div>
<div class="t" style="left:1711px;top:927px;font-size:10px;line-height:10px;color:#e8e8e8;">Fläche:</div>
<div class="t" style="left:1711px;top:952px;font-size:10px;line-height:10px;color:#e8913a;">Deckkraft:</div>
<div class="a" style="left:1711px;top:963px;width:48px;height:0;border-bottom:1px dotted #e8913a"></div>
<div class="t" style="left:1788px;top:952px;font-size:10px;line-height:10px;color:#e8e8e8;">Standard</div>
<div class="a" style="left:1788px;top:898px;width:17px;height:17px;background:#fff;border:1px solid #222;box-shadow:inset 0 0 0 1px #fff, inset 0 0 0 2px #222"></div>
<svg style="left:1791px;top:901px" width="11" height="11"><path d="M1.5,9.5 L9.5,1.5" stroke="#e0202a" stroke-width="2"/></svg>
<div class="a" style="left:1788px;top:923px;width:17px;height:17px;background:#858587;border:1px solid #222;box-shadow:inset 0 0 0 2px #fff, inset 0 0 0 3px #222"></div>
<svg style="left:1669px;top:1002px" width="230" height="14"><g fill="none" stroke="#c0c0c0" stroke-width="1.3"><rect x="1" y="1.5" width="10" height="10"/><rect x="27.5" y="1.5" width="10" height="10"/><rect x="30" y="4" width="5" height="5" fill="#c0c0c0" stroke="none"/><circle cx="164.5" cy="7" r="5"/><path d="M161,3.5 L168,10.5"/></g><text x="52" y="12" font-family="Liberation Serif" font-style="italic" font-size="13" fill="#c0c0c0">fx</text><path d="M64,9 L68,9 L66,11.5 Z" fill="#c0c0c0"/><path d="M186,2 L197,2 L197,12 L189,12 L186,9 Z" fill="#5e5e5e"/><path d="M211,3.5 L223,3.5 M212.5,4 L213.5,12.5 L220.5,12.5 L221.5,4 M215,6 L215,11 M217,6 L217,11 M219,6 L219,11" fill="none" stroke="#5e5e5e"/></svg>
<div class="a" style="left:1658px;top:1017px;width:262px;height:3px;background:#2b2b2b"></div>
<div class="a" style="left:1658px;top:1020px;width:262px;height:19px;background:#313131"></div>
<div class="a" style="left:1658px;top:1020px;width:56px;height:19px;background:#4a4a4a"></div>
<svg style="left:1663px;top:1023px" width="6" height="11"><path d="M0.5,4 L3,1 L5.5,4 M0.5,7 L3,10 L5.5,7" fill="none" stroke="#d0d0d0" stroke-width="1.1"/></svg>
<div class="tab" style="left:1671px;top:1024px;background:none;font-size:10px;color:#eeeeee">Zeichen</div>
<div class="a" style="left:1714px;top:1021px;width:46px;height:18px;background:#383838;border-right:1px solid #2a2a2a"></div>
<div class="tab" style="left:1722px;top:1024px;background:none;font-size:10px;color:#a0a0a0">Absatz</div>
<div class="a" style="left:1760px;top:1021px;width:62px;height:18px;background:#383838;border-right:1px solid #2a2a2a"></div>
<div class="tab" style="left:1768px;top:1024px;background:none;font-size:10px;color:#a0a0a0">OpenType</div>
<svg style="left:1901px;top:1025px" width="14" height="8"><path d="M0,1.5 L4,1.5 L2,4 Z" fill="#d0d0d0"/><path d="M5,0.5 L14,0.5 M5,3 L14,3 M5,5.5 L14,5.5 M5,7.5 L14,7.5" stroke="#d0d0d0" stroke-width="0.9"/></svg>
</body></html>
